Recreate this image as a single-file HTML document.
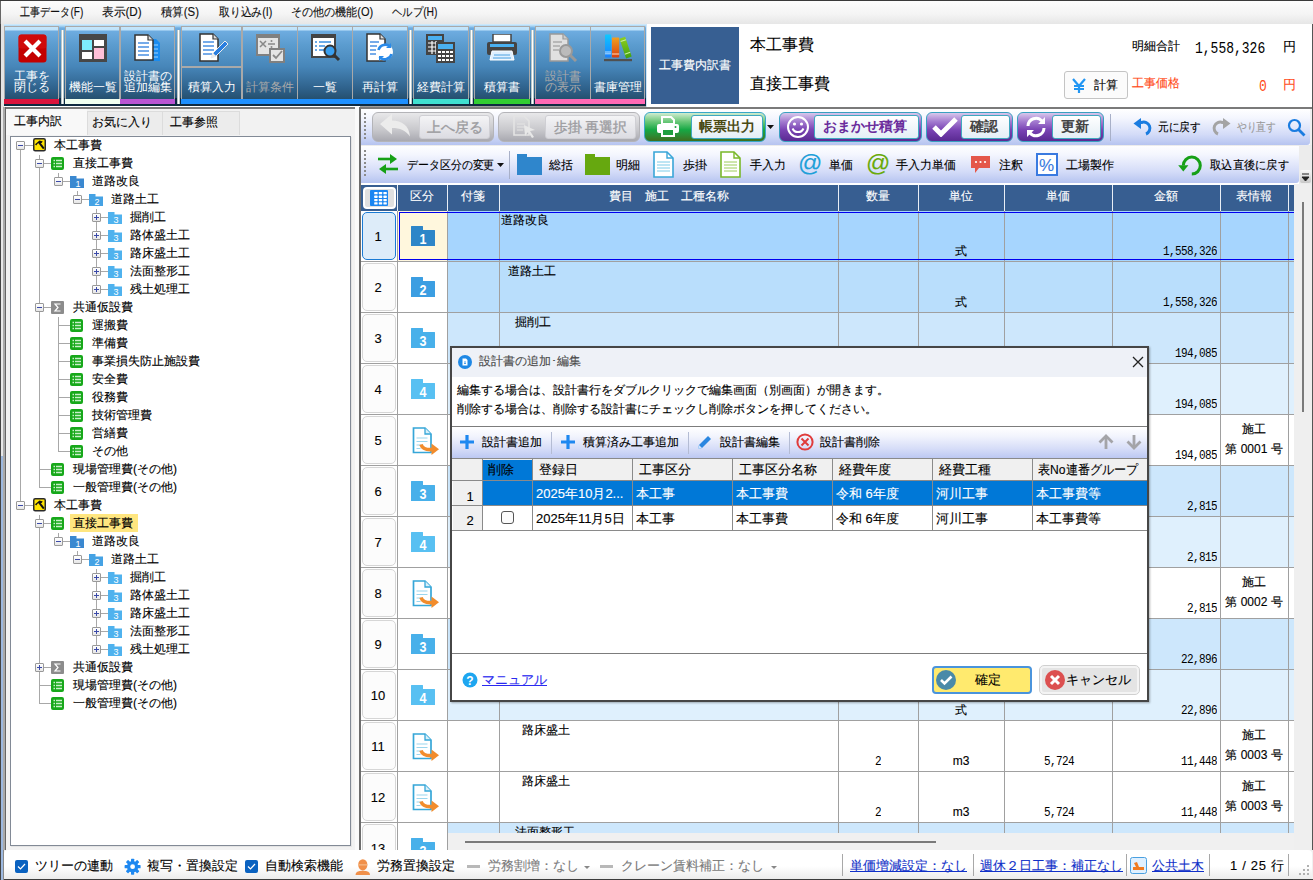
<!DOCTYPE html>
<html><head><meta charset="utf-8">
<style>
*{box-sizing:border-box}
html,body{margin:0;padding:0}
body{width:1313px;height:880px;position:relative;overflow:hidden;background:#f0f0f0;font-family:"Liberation Sans",sans-serif;font-size:12px;color:#000}
.a{position:absolute}
.t{position:absolute;white-space:nowrap;line-height:1;-webkit-text-stroke:0.12px currentColor}
/* menu */
#menu{left:0;top:0;width:1313px;height:24px;background:linear-gradient(#fdfdfd,#f4f4f4 60%,#e6e6e6)}
#menu .t{top:6px;font-size:12px;color:#111}
/* ribbon */
#ribbon{left:0;top:24px;width:650px;height:84px;background:#9fd0f2}
.rb{position:absolute;top:2px;height:73px;border:1px solid #a9a9a9;border-bottom:none;background:linear-gradient(#c3e6fc 0,#bfe2fa 3px,#6eace0 4px,#5b9ccf 25%,#4786b9 55%,#2f628c 85%,#25506f 100%)}
.rb .lb{position:absolute;left:0;right:0;text-align:center;color:#fff;font-size:12px;line-height:12px;white-space:nowrap}
.rb.dis .lb{color:#a9a9a9}
.bar{position:absolute;top:74px;height:6px}
.sep{position:absolute;top:6px;width:3px;height:74px;background:linear-gradient(90deg,#9aa,#fff 50%,#9aa)}
</style></head>
<body>
<div id="menu" class="a">
  <div class="t" style="left:20px;transform:scaleX(0.84);transform-origin:0 0">工事データ(F)</div>
  <div class="t" style="left:102px;transform:scaleX(0.975);transform-origin:0 0">表示(D)</div>
  <div class="t" style="left:161px;transform:scaleX(0.95);transform-origin:0 0">積算(S)</div>
  <div class="t" style="left:219px;transform:scaleX(0.9);transform-origin:0 0">取り込み(I)</div>
  <div class="t" style="left:291px;transform:scaleX(0.92);transform-origin:0 0">その他の機能(O)</div>
  <div class="t" style="left:392px;transform:scaleX(0.865);transform-origin:0 0">ヘルプ(H)</div>
</div>
<div class="a" style="left:0;top:0;width:1px;height:880px;background:#666"></div>

<div class="a" style="left:0;top:0;width:1313px;height:1px;background:#3a3a3a"></div>
<div id="ribbon" class="a" style="background:linear-gradient(#d8eefc 0,#a9d6f5 2px,#6eace0 4px,#5b9ccf 20%,#4786b9 50%,#2f628c 80%,#25506f 88%,#0c2a44 88%)">
  <div class="a" style="left:0;top:80px;width:650px;height:2px;background:#0f2a40"></div>
  <div class="a" style="left:0;top:82px;width:650px;height:2px;background:linear-gradient(#8a8a8a,#d8d8d8)"></div>
  <!-- bars -->
  <div class="bar" style="left:4px;width:55px;background:#dc143c"></div>
  <div class="bar" style="left:65px;width:55px;background:#f0fff0"></div>
  <div class="bar" style="left:120px;width:55px;background:#ba55d3"></div>
  <div class="bar" style="left:181px;width:227px;background:#1e90ff"></div>
  <div class="bar" style="left:413px;width:56px;background:#40e0d0"></div>
  <div class="bar" style="left:474px;width:56px;background:#32cd32"></div>
  <div class="bar" style="left:535px;width:110px;background:#ff69b4"></div>
  <!-- separators -->
  <div class="sep" style="left:61px"></div>
  <div class="sep" style="left:177px"></div>
  <div class="sep" style="left:409px"></div>
  <div class="sep" style="left:470px"></div>
  <div class="sep" style="left:531px"></div>

  <div class="rb" style="left:4px;width:55px">
    <svg class="a" style="left:13px;top:7px" width="29" height="29"><rect x="0.5" y="0.5" width="28" height="28" rx="3" fill="#c40000"/><rect x="0.5" y="0.5" width="28" height="14" rx="3" fill="#d81010" opacity=".6"/><path d="M8.5 8.5L20.5 20.5M20.5 8.5L8.5 20.5" stroke="#fff" stroke-width="4.2" stroke-linecap="square"/></svg>
    <div class="lb" style="top:43px">工事を</div>
    <div class="lb" style="top:54px">閉じる</div>
  </div>
  <div class="rb" style="left:65px;width:55px">
    <svg class="a" style="left:13px;top:7px" width="28" height="28"><rect width="28" height="28" fill="#474747"/><rect x="3" y="6" width="10" height="10" fill="#7eeefc"/><rect x="15" y="6" width="10" height="6" fill="#fff"/><rect x="3" y="18" width="10" height="7" fill="#fff"/><rect x="15" y="14" width="10" height="11" fill="#ffc0d8"/></svg>
    <div class="lb" style="top:54px">機能一覧</div>
  </div>
  <div class="rb" style="left:120px;width:55px">
    <svg class="a" style="left:13px;top:7px" width="30" height="30"><path d="M13 5h9l4 4v18H13z" fill="#1a8cf0"/><path d="M14 11h10M14 15h10M14 19h10M14 23h10" stroke="#9fd4ff" stroke-width="1"/><path d="M1 1h13l5 5v20H1z" fill="#fff" stroke="#333" stroke-width="1.5"/><path d="M14 1v5h5" fill="#ddd" stroke="#333" stroke-width="1.2"/><path d="M4 9h11M4 13h11M4 17h11M4 21h11" stroke="#4a90e2" stroke-width="1.3"/></svg>
    <div class="lb" style="top:43px">設計書の</div>
    <div class="lb" style="top:54px">追加編集</div>
  </div>
  <div class="rb" style="left:181px;width:61px">
    <div class="a" style="left:-1px;top:39px;width:61px;height:2px;background:#a9a9a9"></div>
    <svg class="a" style="left:17px;top:6px" width="30" height="30"><path d="M1 1h13l5 5v22H1z" fill="#fff" stroke="#333" stroke-width="1.5"/><path d="M14 1v5h5" fill="#ddd" stroke="#333" stroke-width="1.2"/><path d="M4 9h11M4 13h11M4 17h11M4 21h9" stroke="#4a90e2" stroke-width="1.3"/><path d="M12 25l2-5 12-12 3 3-12 12z" fill="#2a7fe0" stroke="#eee" stroke-width="1"/><path d="M12 25l2-5 3 3z" fill="#eee"/></svg>
    <div class="lb" style="top:54px">積算入力</div>
  </div>
  <div class="rb dis" style="left:242px;width:56px">
    <svg class="a" style="left:13px;top:7px" width="30" height="30"><rect x="0" y="0" width="24" height="22" fill="#808080"/><rect x="2" y="4" width="20" height="16" fill="#e4e4e4"/><path d="M4 7l6 6M10 7l-6 6" stroke="#888" stroke-width="1.5"/><path d="M12 10h7" stroke="#888" stroke-width="1.5"/><circle cx="15.5" cy="7" r="1" fill="#888"/><circle cx="15.5" cy="13" r="1" fill="#888"/><rect x="14" y="15" width="14" height="13" fill="#e4e4e4" stroke="#808080" stroke-width="2"/><path d="M17 21l3 3 6-7" stroke="#888" stroke-width="1.8" fill="none"/></svg>
    <div class="lb" style="top:54px">計算条件</div>
  </div>
  <div class="rb" style="left:297px;width:56px">
    <svg class="a" style="left:13px;top:7px" width="30" height="30"><rect x="0" y="0" width="25" height="24" fill="#444"/><rect x="2" y="4" width="21" height="18" fill="#fff"/><path d="M4 8h2M8 8h12M4 12h2M8 12h6M4 16h2M8 16h5" stroke="#3a8ee0" stroke-width="1.5"/><circle cx="19" cy="17" r="5.5" fill="#3aa0f0" stroke="#333" stroke-width="2"/><path d="M23 21l5 5" stroke="#333" stroke-width="3"/></svg>
    <div class="lb" style="top:54px">一覧</div>
  </div>
  <div class="rb" style="left:352px;width:56px">
    <svg class="a" style="left:13px;top:6px" width="30" height="30"><path d="M1 1h13l5 5v22H1z" fill="#fff" stroke="#333" stroke-width="1.5"/><path d="M14 1v5h5" fill="#ddd" stroke="#333" stroke-width="1.2"/><path d="M4 9h9M4 13h7M4 17h6M4 21h6" stroke="#4a90e2" stroke-width="1.3"/><circle cx="19" cy="19" r="8" fill="#fff"/><path d="M12.5 17a7 7 0 0 1 12-3M25.5 21a7 7 0 0 1-12 3" stroke="#2a8ae8" stroke-width="2.6" fill="none"/><path d="M25 10v5h-5z M13 28v-5h5z" fill="#2a8ae8"/></svg>
    <div class="lb" style="top:54px">再計算</div>
  </div>
  <div class="rb" style="left:413px;width:56px">
    <svg class="a" style="left:12px;top:7px" width="30" height="30"><rect x="0" y="0" width="18" height="21" fill="#444"/><rect x="2" y="2" width="14" height="4" fill="#4ab0f0"/><path d="M2 9h14M2 13h14M2 17h14M6 7v13M10 7v13" stroke="#fff" stroke-width="1.2"/><rect x="10" y="8" width="19" height="21" fill="#444"/><rect x="12" y="10" width="15" height="5" fill="#4ab0f0"/><g fill="#fff"><rect x="12" y="17" width="3" height="2"/><rect x="16" y="17" width="3" height="2"/><rect x="20" y="17" width="3" height="2"/><rect x="24" y="17" width="3" height="2"/><rect x="12" y="21" width="3" height="2"/><rect x="16" y="21" width="3" height="2"/><rect x="20" y="21" width="3" height="2"/><rect x="24" y="21" width="3" height="2"/><rect x="12" y="25" width="3" height="2"/><rect x="16" y="25" width="3" height="2"/><rect x="20" y="25" width="3" height="2"/><rect x="24" y="25" width="3" height="2"/></g></svg>
    <div class="lb" style="top:54px">経費計算</div>
  </div>
  <div class="rb" style="left:474px;width:56px">
    <svg class="a" style="left:12px;top:7px" width="30" height="30"><rect x="6" y="0" width="18" height="8" fill="#fff" stroke="#444" stroke-width="1.5"/><rect x="0" y="8" width="30" height="13" rx="2" fill="#444"/><rect x="3" y="10" width="24" height="3" fill="#4ab0f0"/><path d="M5 17h20l2 9H3z" fill="#dff0ff" stroke="#fff" stroke-width="1"/><path d="M7 21h16M6 24h18" stroke="#4aa0e0" stroke-width="1"/></svg>
    <div class="lb" style="top:54px">積算書</div>
  </div>
  <div class="rb dis" style="left:535px;width:56px">
    <svg class="a" style="left:13px;top:6px" width="30" height="30"><path d="M1 1h13l5 5v22H1z" fill="#e0e0e0" stroke="#999" stroke-width="1.5"/><path d="M14 1v5h5" fill="#ccc" stroke="#999" stroke-width="1.2"/><path d="M4 9h9M4 13h7M4 17h6" stroke="#aaa" stroke-width="1.3"/><circle cx="17" cy="18" r="6" fill="#bbb" stroke="#999" stroke-width="2"/><path d="M21 22l6 6" stroke="#999" stroke-width="3"/></svg>
    <div class="lb" style="top:43px">設計書</div>
    <div class="lb" style="top:54px">の表示</div>
  </div>
  <div class="rb" style="left:590px;width:55px">
    <svg class="a" style="left:12px;top:6px" width="30" height="30"><defs><linearGradient id="gb" x1="0" x2="0" y1="0" y2="1"><stop offset="0" stop-color="#10c8ff"/><stop offset="1" stop-color="#1a80ff"/></linearGradient><linearGradient id="go" x1="0" x2="0" y1="0" y2="1"><stop offset="0" stop-color="#f0a020"/><stop offset="1" stop-color="#d84010"/></linearGradient><linearGradient id="gg" x1="0" x2="0" y1="0" y2="1"><stop offset="0" stop-color="#90d020"/><stop offset="1" stop-color="#40a010"/></linearGradient></defs><rect x="2" y="1.5" width="6.2" height="23" rx=".8" fill="url(#gb)"/><path d="M2 19h6.2M2 20.8h6.2" stroke="#c8e8ff" stroke-width=".9"/><rect x="9" y="4.5" width="7.2" height="20" rx=".8" fill="url(#go)"/><path d="M9 21h7.2" stroke="#ffc8a0" stroke-width="1.2"/><path d="M16.5 5.8l5.6-2 6.6 19.6-5.6 2z" fill="url(#gg)"/><path d="M17.6 8.6l5.4-1.9M21.8 21.2l5.4-1.9" stroke="#c8f0a0" stroke-width="1.1"/><rect x="1" y="26" width="28" height="2.2" fill="#505050"/></svg>
    <div class="lb" style="top:54px">書庫管理</div>
  </div>
</div>
<div class="a" style="left:646px;top:24px;width:667px;height:84px;background:#fff;border-bottom:1px solid #6c6c6c;border-left:1px solid #cfe6f8"></div>
<div class="a" style="left:651px;top:27px;width:88px;height:77px;background:#375f92"></div>
<div class="t" style="left:651px;top:59px;width:88px;text-align:center;color:#fff;font-size:12px">工事費内訳書</div>
<div class="t" style="left:750px;top:37px;font-size:16px">本工事費</div>
<div class="t" style="left:750px;top:76px;font-size:16px">直接工事費</div>
<div class="t" style="left:1132px;top:40px;font-size:12px">明細合計</div>
<div class="t" style="left:1195px;top:40px;font-size:13px;font-family:'Liberation Mono',monospace;letter-spacing:0px;-webkit-text-stroke:0;transform:scaleY(1.25);transform-origin:0 0">1,558,326</div>
<div class="t" style="left:1283px;top:40px;font-size:13px">円</div>
<div class="a" style="left:1064px;top:71px;width:64px;height:28px;background:#fbfbfb;border:1px solid #c4c4c4;border-radius:3px"></div>
<svg class="a" style="left:1072px;top:78px" width="14" height="15"><path d="M1 1l6 7 6-7M2 8h10M2 11h10M7 8v7" stroke="#2196f3" stroke-width="2.2" fill="none"/></svg>
<div class="t" style="left:1094px;top:79px;font-size:12px">計算</div>
<div class="t" style="left:1132px;top:77px;font-size:12px;color:#ff4c1a">工事価格</div>
<div class="t" style="left:1259px;top:78px;font-size:13px;color:#ff4c1a;font-family:'Liberation Mono',monospace;-webkit-text-stroke:0;transform:scaleY(1.25);transform-origin:0 0">0</div>
<div class="t" style="left:1283px;top:78px;font-size:13px;color:#ff4c1a">円</div>
<div class="a" style="left:0;top:24px;width:4px;height:84px;background:linear-gradient(90deg,#444 0,#444 1px,#e4e4e4 1px)"></div>
<div class="a" style="left:0;top:107px;width:6px;height:773px;background:linear-gradient(90deg,#444 0,#444 1px,#e8e8e8 1px,#e8e8e8 3px,#aaa 3px,#aaa 5px,#666 5px)"></div>
<div class="a" style="left:1px;top:456px;width:2px;height:424px;background:#9db9e0"></div>
<div class="a" style="left:4px;top:106px;width:356px;height:1px;background:#fff"></div>
<div class="a" style="left:6px;top:107px;width:349px;height:743px;background:#f2f2f2;border-top:2px solid #7a7a7a"></div>
<div class="a" style="left:355px;top:107px;width:4px;height:743px;background:#fafafa"></div>
<div class="a" style="left:6px;top:109px;width:81px;height:26px;background:#f8f8f8"></div>
<div class="a" style="left:87px;top:111px;width:76px;height:24px;background:#ececec;border:1px solid #dcdcdc;border-bottom:none"></div>
<div class="a" style="left:163px;top:111px;width:77px;height:24px;background:#ececec;border:1px solid #dcdcdc;border-bottom:none;border-left:none"></div>
<div class="t" style="left:14px;top:115px;font-size:12px">工事内訳</div>
<div class="t" style="left:92px;top:116px;font-size:12px">お気に入り</div>
<div class="t" style="left:170px;top:116px;font-size:12px">工事参照</div>
<div class="a" style="left:10px;top:136px;width:341px;height:710px;background:#fff;border:1px solid #828a96;box-shadow:1px 1px 0 #e4e4e4"></div>
<div class="a" style="left:20px;top:145px;width:1px;height:9px;background:#a8a8a8"></div>
<div class="a" style="left:20px;top:145px;width:13px;height:1px;background:#a8a8a8"></div>
<div class="a" style="left:16px;top:141px;width:9px;height:9px;border:1px solid #999;border-radius:1px;background:linear-gradient(#fff,#e6e6e6)"></div>
<div class="a" style="left:18px;top:145px;width:5px;height:1px;background:#3b4aa8"></div>
<svg class="a" style="left:33px;top:138px" width="13" height="14"><rect x="0.75" y="0.75" width="11.5" height="12" rx="1.5" fill="#ffe400" stroke="#2a2a2a" stroke-width="1.5"/><path d="M2 6.2L6.5 2.6 9.8 3.4 8.6 5 5 5.2 3.2 7.4z" fill="#111"/><path d="M6.2 4.6L10.8 10.6" stroke="#111" stroke-width="2"/></svg>
<div class="t" style="left:54px;top:139px;font-size:12px">本工事費</div>
<div class="a" style="left:39px;top:155px;width:1px;height:8px;background:#a8a8a8"></div>
<div class="a" style="left:39px;top:163px;width:1px;height:9px;background:#a8a8a8"></div>
<div class="a" style="left:20px;top:154px;width:1px;height:18px;background:#a8a8a8"></div>
<div class="a" style="left:39px;top:163px;width:13px;height:1px;background:#a8a8a8"></div>
<div class="a" style="left:35px;top:159px;width:9px;height:9px;border:1px solid #999;border-radius:1px;background:linear-gradient(#fff,#e6e6e6)"></div>
<div class="a" style="left:37px;top:163px;width:5px;height:1px;background:#3b4aa8"></div>
<svg class="a" style="left:51px;top:157px" width="14" height="13"><rect x="0" y="0" width="13" height="13" rx="2" fill="#17a81a"/><path d="M2.5 3.5h1.5M5 3.5h6M2.5 6.5h1.5M5 6.5h6M2.5 9.5h1.5M5 9.5h6" stroke="#c8f0c8" stroke-width="1.5"/></svg>
<div class="t" style="left:73px;top:157px;font-size:12px">直接工事費</div>
<div class="a" style="left:58px;top:173px;width:1px;height:8px;background:#a8a8a8"></div>
<div class="a" style="left:20px;top:172px;width:1px;height:18px;background:#a8a8a8"></div>
<div class="a" style="left:39px;top:172px;width:1px;height:18px;background:#a8a8a8"></div>
<div class="a" style="left:58px;top:181px;width:13px;height:1px;background:#a8a8a8"></div>
<div class="a" style="left:54px;top:177px;width:9px;height:9px;border:1px solid #999;border-radius:1px;background:linear-gradient(#fff,#e6e6e6)"></div>
<div class="a" style="left:56px;top:181px;width:5px;height:1px;background:#3b4aa8"></div>
<svg class="a" style="left:70px;top:176px" width="14" height="12"><path d="M0 0h6.5v2.5H14V12H0z" fill="#3a88d0"/><text x="8" y="10.6" font-size="9" fill="#fff" text-anchor="middle" font-family="Liberation Sans">1</text></svg>
<div class="t" style="left:92px;top:175px;font-size:12px">道路改良</div>
<div class="a" style="left:77px;top:191px;width:1px;height:8px;background:#a8a8a8"></div>
<div class="a" style="left:20px;top:190px;width:1px;height:18px;background:#a8a8a8"></div>
<div class="a" style="left:39px;top:190px;width:1px;height:18px;background:#a8a8a8"></div>
<div class="a" style="left:77px;top:199px;width:13px;height:1px;background:#a8a8a8"></div>
<div class="a" style="left:73px;top:195px;width:9px;height:9px;border:1px solid #999;border-radius:1px;background:linear-gradient(#fff,#e6e6e6)"></div>
<div class="a" style="left:75px;top:199px;width:5px;height:1px;background:#3b4aa8"></div>
<svg class="a" style="left:89px;top:194px" width="14" height="12"><path d="M0 0h6.5v2.5H14V12H0z" fill="#45a2e4"/><text x="8" y="10.6" font-size="9" fill="#fff" text-anchor="middle" font-family="Liberation Sans">2</text></svg>
<div class="t" style="left:111px;top:193px;font-size:12px">道路土工</div>
<div class="a" style="left:96px;top:209px;width:1px;height:8px;background:#a8a8a8"></div>
<div class="a" style="left:96px;top:217px;width:1px;height:9px;background:#a8a8a8"></div>
<div class="a" style="left:20px;top:208px;width:1px;height:18px;background:#a8a8a8"></div>
<div class="a" style="left:39px;top:208px;width:1px;height:18px;background:#a8a8a8"></div>
<div class="a" style="left:96px;top:217px;width:13px;height:1px;background:#a8a8a8"></div>
<div class="a" style="left:92px;top:213px;width:9px;height:9px;border:1px solid #999;border-radius:1px;background:linear-gradient(#fff,#e6e6e6)"></div>
<div class="a" style="left:94px;top:217px;width:5px;height:1px;background:#3b4aa8"></div>
<div class="a" style="left:96px;top:215px;width:1px;height:5px;background:#3b4aa8"></div>
<svg class="a" style="left:108px;top:212px" width="14" height="12"><path d="M0 0h6.5v2.5H14V12H0z" fill="#4fb2ee"/><text x="8" y="10.6" font-size="9" fill="#fff" text-anchor="middle" font-family="Liberation Sans">3</text></svg>
<div class="t" style="left:130px;top:211px;font-size:12px">掘削工</div>
<div class="a" style="left:96px;top:226px;width:1px;height:9px;background:#a8a8a8"></div>
<div class="a" style="left:96px;top:235px;width:1px;height:9px;background:#a8a8a8"></div>
<div class="a" style="left:20px;top:226px;width:1px;height:18px;background:#a8a8a8"></div>
<div class="a" style="left:39px;top:226px;width:1px;height:18px;background:#a8a8a8"></div>
<div class="a" style="left:96px;top:235px;width:13px;height:1px;background:#a8a8a8"></div>
<div class="a" style="left:92px;top:231px;width:9px;height:9px;border:1px solid #999;border-radius:1px;background:linear-gradient(#fff,#e6e6e6)"></div>
<div class="a" style="left:94px;top:235px;width:5px;height:1px;background:#3b4aa8"></div>
<div class="a" style="left:96px;top:233px;width:1px;height:5px;background:#3b4aa8"></div>
<svg class="a" style="left:108px;top:230px" width="14" height="12"><path d="M0 0h6.5v2.5H14V12H0z" fill="#4fb2ee"/><text x="8" y="10.6" font-size="9" fill="#fff" text-anchor="middle" font-family="Liberation Sans">3</text></svg>
<div class="t" style="left:130px;top:229px;font-size:12px">路体盛土工</div>
<div class="a" style="left:96px;top:244px;width:1px;height:9px;background:#a8a8a8"></div>
<div class="a" style="left:96px;top:253px;width:1px;height:9px;background:#a8a8a8"></div>
<div class="a" style="left:20px;top:244px;width:1px;height:18px;background:#a8a8a8"></div>
<div class="a" style="left:39px;top:244px;width:1px;height:18px;background:#a8a8a8"></div>
<div class="a" style="left:96px;top:253px;width:13px;height:1px;background:#a8a8a8"></div>
<div class="a" style="left:92px;top:249px;width:9px;height:9px;border:1px solid #999;border-radius:1px;background:linear-gradient(#fff,#e6e6e6)"></div>
<div class="a" style="left:94px;top:253px;width:5px;height:1px;background:#3b4aa8"></div>
<div class="a" style="left:96px;top:251px;width:1px;height:5px;background:#3b4aa8"></div>
<svg class="a" style="left:108px;top:248px" width="14" height="12"><path d="M0 0h6.5v2.5H14V12H0z" fill="#4fb2ee"/><text x="8" y="10.6" font-size="9" fill="#fff" text-anchor="middle" font-family="Liberation Sans">3</text></svg>
<div class="t" style="left:130px;top:247px;font-size:12px">路床盛土工</div>
<div class="a" style="left:96px;top:262px;width:1px;height:9px;background:#a8a8a8"></div>
<div class="a" style="left:96px;top:271px;width:1px;height:9px;background:#a8a8a8"></div>
<div class="a" style="left:20px;top:262px;width:1px;height:18px;background:#a8a8a8"></div>
<div class="a" style="left:39px;top:262px;width:1px;height:18px;background:#a8a8a8"></div>
<div class="a" style="left:96px;top:271px;width:13px;height:1px;background:#a8a8a8"></div>
<div class="a" style="left:92px;top:267px;width:9px;height:9px;border:1px solid #999;border-radius:1px;background:linear-gradient(#fff,#e6e6e6)"></div>
<div class="a" style="left:94px;top:271px;width:5px;height:1px;background:#3b4aa8"></div>
<div class="a" style="left:96px;top:269px;width:1px;height:5px;background:#3b4aa8"></div>
<svg class="a" style="left:108px;top:266px" width="14" height="12"><path d="M0 0h6.5v2.5H14V12H0z" fill="#4fb2ee"/><text x="8" y="10.6" font-size="9" fill="#fff" text-anchor="middle" font-family="Liberation Sans">3</text></svg>
<div class="t" style="left:130px;top:265px;font-size:12px">法面整形工</div>
<div class="a" style="left:96px;top:280px;width:1px;height:9px;background:#a8a8a8"></div>
<div class="a" style="left:20px;top:280px;width:1px;height:18px;background:#a8a8a8"></div>
<div class="a" style="left:39px;top:280px;width:1px;height:18px;background:#a8a8a8"></div>
<div class="a" style="left:96px;top:289px;width:13px;height:1px;background:#a8a8a8"></div>
<div class="a" style="left:92px;top:285px;width:9px;height:9px;border:1px solid #999;border-radius:1px;background:linear-gradient(#fff,#e6e6e6)"></div>
<div class="a" style="left:94px;top:289px;width:5px;height:1px;background:#3b4aa8"></div>
<div class="a" style="left:96px;top:287px;width:1px;height:5px;background:#3b4aa8"></div>
<svg class="a" style="left:108px;top:284px" width="14" height="12"><path d="M0 0h6.5v2.5H14V12H0z" fill="#4fb2ee"/><text x="8" y="10.6" font-size="9" fill="#fff" text-anchor="middle" font-family="Liberation Sans">3</text></svg>
<div class="t" style="left:130px;top:283px;font-size:12px">残土処理工</div>
<div class="a" style="left:39px;top:298px;width:1px;height:9px;background:#a8a8a8"></div>
<div class="a" style="left:39px;top:307px;width:1px;height:9px;background:#a8a8a8"></div>
<div class="a" style="left:20px;top:298px;width:1px;height:18px;background:#a8a8a8"></div>
<div class="a" style="left:39px;top:307px;width:13px;height:1px;background:#a8a8a8"></div>
<div class="a" style="left:35px;top:303px;width:9px;height:9px;border:1px solid #999;border-radius:1px;background:linear-gradient(#fff,#e6e6e6)"></div>
<div class="a" style="left:37px;top:307px;width:5px;height:1px;background:#3b4aa8"></div>
<svg class="a" style="left:51px;top:301px" width="14" height="13"><rect x="0" y="0" width="13" height="13" rx="1" fill="#8c8c8c"/><path d="M9.5 3H4l3 3.5L4 10h5.5" stroke="#fff" stroke-width="1.2" fill="none"/></svg>
<div class="t" style="left:73px;top:301px;font-size:12px">共通仮設費</div>
<div class="a" style="left:58px;top:317px;width:1px;height:8px;background:#a8a8a8"></div>
<div class="a" style="left:58px;top:325px;width:1px;height:9px;background:#a8a8a8"></div>
<div class="a" style="left:20px;top:316px;width:1px;height:18px;background:#a8a8a8"></div>
<div class="a" style="left:39px;top:316px;width:1px;height:18px;background:#a8a8a8"></div>
<div class="a" style="left:58px;top:325px;width:13px;height:1px;background:#a8a8a8"></div>
<svg class="a" style="left:70px;top:319px" width="14" height="13"><rect x="0" y="0" width="13" height="13" rx="2" fill="#17a81a"/><path d="M2.5 3.5h1.5M5 3.5h6M2.5 6.5h1.5M5 6.5h6M2.5 9.5h1.5M5 9.5h6" stroke="#c8f0c8" stroke-width="1.5"/></svg>
<div class="t" style="left:92px;top:319px;font-size:12px">運搬費</div>
<div class="a" style="left:58px;top:334px;width:1px;height:9px;background:#a8a8a8"></div>
<div class="a" style="left:58px;top:343px;width:1px;height:9px;background:#a8a8a8"></div>
<div class="a" style="left:20px;top:334px;width:1px;height:18px;background:#a8a8a8"></div>
<div class="a" style="left:39px;top:334px;width:1px;height:18px;background:#a8a8a8"></div>
<div class="a" style="left:58px;top:343px;width:13px;height:1px;background:#a8a8a8"></div>
<svg class="a" style="left:70px;top:337px" width="14" height="13"><rect x="0" y="0" width="13" height="13" rx="2" fill="#17a81a"/><path d="M2.5 3.5h1.5M5 3.5h6M2.5 6.5h1.5M5 6.5h6M2.5 9.5h1.5M5 9.5h6" stroke="#c8f0c8" stroke-width="1.5"/></svg>
<div class="t" style="left:92px;top:337px;font-size:12px">準備費</div>
<div class="a" style="left:58px;top:352px;width:1px;height:9px;background:#a8a8a8"></div>
<div class="a" style="left:58px;top:361px;width:1px;height:9px;background:#a8a8a8"></div>
<div class="a" style="left:20px;top:352px;width:1px;height:18px;background:#a8a8a8"></div>
<div class="a" style="left:39px;top:352px;width:1px;height:18px;background:#a8a8a8"></div>
<div class="a" style="left:58px;top:361px;width:13px;height:1px;background:#a8a8a8"></div>
<svg class="a" style="left:70px;top:355px" width="14" height="13"><rect x="0" y="0" width="13" height="13" rx="2" fill="#17a81a"/><path d="M2.5 3.5h1.5M5 3.5h6M2.5 6.5h1.5M5 6.5h6M2.5 9.5h1.5M5 9.5h6" stroke="#c8f0c8" stroke-width="1.5"/></svg>
<div class="t" style="left:92px;top:355px;font-size:12px">事業損失防止施設費</div>
<div class="a" style="left:58px;top:370px;width:1px;height:9px;background:#a8a8a8"></div>
<div class="a" style="left:58px;top:379px;width:1px;height:9px;background:#a8a8a8"></div>
<div class="a" style="left:20px;top:370px;width:1px;height:18px;background:#a8a8a8"></div>
<div class="a" style="left:39px;top:370px;width:1px;height:18px;background:#a8a8a8"></div>
<div class="a" style="left:58px;top:379px;width:13px;height:1px;background:#a8a8a8"></div>
<svg class="a" style="left:70px;top:373px" width="14" height="13"><rect x="0" y="0" width="13" height="13" rx="2" fill="#17a81a"/><path d="M2.5 3.5h1.5M5 3.5h6M2.5 6.5h1.5M5 6.5h6M2.5 9.5h1.5M5 9.5h6" stroke="#c8f0c8" stroke-width="1.5"/></svg>
<div class="t" style="left:92px;top:373px;font-size:12px">安全費</div>
<div class="a" style="left:58px;top:388px;width:1px;height:9px;background:#a8a8a8"></div>
<div class="a" style="left:58px;top:397px;width:1px;height:9px;background:#a8a8a8"></div>
<div class="a" style="left:20px;top:388px;width:1px;height:18px;background:#a8a8a8"></div>
<div class="a" style="left:39px;top:388px;width:1px;height:18px;background:#a8a8a8"></div>
<div class="a" style="left:58px;top:397px;width:13px;height:1px;background:#a8a8a8"></div>
<svg class="a" style="left:70px;top:391px" width="14" height="13"><rect x="0" y="0" width="13" height="13" rx="2" fill="#17a81a"/><path d="M2.5 3.5h1.5M5 3.5h6M2.5 6.5h1.5M5 6.5h6M2.5 9.5h1.5M5 9.5h6" stroke="#c8f0c8" stroke-width="1.5"/></svg>
<div class="t" style="left:92px;top:391px;font-size:12px">役務費</div>
<div class="a" style="left:58px;top:406px;width:1px;height:9px;background:#a8a8a8"></div>
<div class="a" style="left:58px;top:415px;width:1px;height:9px;background:#a8a8a8"></div>
<div class="a" style="left:20px;top:406px;width:1px;height:18px;background:#a8a8a8"></div>
<div class="a" style="left:39px;top:406px;width:1px;height:18px;background:#a8a8a8"></div>
<div class="a" style="left:58px;top:415px;width:13px;height:1px;background:#a8a8a8"></div>
<svg class="a" style="left:70px;top:409px" width="14" height="13"><rect x="0" y="0" width="13" height="13" rx="2" fill="#17a81a"/><path d="M2.5 3.5h1.5M5 3.5h6M2.5 6.5h1.5M5 6.5h6M2.5 9.5h1.5M5 9.5h6" stroke="#c8f0c8" stroke-width="1.5"/></svg>
<div class="t" style="left:92px;top:409px;font-size:12px">技術管理費</div>
<div class="a" style="left:58px;top:424px;width:1px;height:9px;background:#a8a8a8"></div>
<div class="a" style="left:58px;top:433px;width:1px;height:9px;background:#a8a8a8"></div>
<div class="a" style="left:20px;top:424px;width:1px;height:18px;background:#a8a8a8"></div>
<div class="a" style="left:39px;top:424px;width:1px;height:18px;background:#a8a8a8"></div>
<div class="a" style="left:58px;top:433px;width:13px;height:1px;background:#a8a8a8"></div>
<svg class="a" style="left:70px;top:427px" width="14" height="13"><rect x="0" y="0" width="13" height="13" rx="2" fill="#17a81a"/><path d="M2.5 3.5h1.5M5 3.5h6M2.5 6.5h1.5M5 6.5h6M2.5 9.5h1.5M5 9.5h6" stroke="#c8f0c8" stroke-width="1.5"/></svg>
<div class="t" style="left:92px;top:427px;font-size:12px">営繕費</div>
<div class="a" style="left:58px;top:442px;width:1px;height:9px;background:#a8a8a8"></div>
<div class="a" style="left:20px;top:442px;width:1px;height:18px;background:#a8a8a8"></div>
<div class="a" style="left:39px;top:442px;width:1px;height:18px;background:#a8a8a8"></div>
<div class="a" style="left:58px;top:451px;width:13px;height:1px;background:#a8a8a8"></div>
<svg class="a" style="left:70px;top:445px" width="14" height="13"><rect x="0" y="0" width="13" height="13" rx="2" fill="#17a81a"/><path d="M2.5 3.5h1.5M5 3.5h6M2.5 6.5h1.5M5 6.5h6M2.5 9.5h1.5M5 9.5h6" stroke="#c8f0c8" stroke-width="1.5"/></svg>
<div class="t" style="left:92px;top:445px;font-size:12px">その他</div>
<div class="a" style="left:39px;top:460px;width:1px;height:9px;background:#a8a8a8"></div>
<div class="a" style="left:39px;top:469px;width:1px;height:9px;background:#a8a8a8"></div>
<div class="a" style="left:20px;top:460px;width:1px;height:18px;background:#a8a8a8"></div>
<div class="a" style="left:39px;top:469px;width:13px;height:1px;background:#a8a8a8"></div>
<svg class="a" style="left:51px;top:463px" width="14" height="13"><rect x="0" y="0" width="13" height="13" rx="2" fill="#17a81a"/><path d="M2.5 3.5h1.5M5 3.5h6M2.5 6.5h1.5M5 6.5h6M2.5 9.5h1.5M5 9.5h6" stroke="#c8f0c8" stroke-width="1.5"/></svg>
<div class="t" style="left:73px;top:463px;font-size:12px">現場管理費(その他)</div>
<div class="a" style="left:39px;top:478px;width:1px;height:9px;background:#a8a8a8"></div>
<div class="a" style="left:20px;top:478px;width:1px;height:18px;background:#a8a8a8"></div>
<div class="a" style="left:39px;top:487px;width:13px;height:1px;background:#a8a8a8"></div>
<svg class="a" style="left:51px;top:481px" width="14" height="13"><rect x="0" y="0" width="13" height="13" rx="2" fill="#17a81a"/><path d="M2.5 3.5h1.5M5 3.5h6M2.5 6.5h1.5M5 6.5h6M2.5 9.5h1.5M5 9.5h6" stroke="#c8f0c8" stroke-width="1.5"/></svg>
<div class="t" style="left:73px;top:481px;font-size:12px">一般管理費(その他)</div>
<div class="a" style="left:20px;top:496px;width:1px;height:9px;background:#a8a8a8"></div>
<div class="a" style="left:20px;top:505px;width:13px;height:1px;background:#a8a8a8"></div>
<div class="a" style="left:16px;top:501px;width:9px;height:9px;border:1px solid #999;border-radius:1px;background:linear-gradient(#fff,#e6e6e6)"></div>
<div class="a" style="left:18px;top:505px;width:5px;height:1px;background:#3b4aa8"></div>
<svg class="a" style="left:33px;top:498px" width="13" height="14"><rect x="0.75" y="0.75" width="11.5" height="12" rx="1.5" fill="#ffe400" stroke="#2a2a2a" stroke-width="1.5"/><path d="M2 6.2L6.5 2.6 9.8 3.4 8.6 5 5 5.2 3.2 7.4z" fill="#111"/><path d="M6.2 4.6L10.8 10.6" stroke="#111" stroke-width="2"/></svg>
<div class="t" style="left:54px;top:499px;font-size:12px">本工事費</div>
<div class="a" style="left:39px;top:515px;width:1px;height:8px;background:#a8a8a8"></div>
<div class="a" style="left:39px;top:523px;width:1px;height:9px;background:#a8a8a8"></div>
<div class="a" style="left:39px;top:523px;width:13px;height:1px;background:#a8a8a8"></div>
<div class="a" style="left:35px;top:519px;width:9px;height:9px;border:1px solid #999;border-radius:1px;background:linear-gradient(#fff,#e6e6e6)"></div>
<div class="a" style="left:37px;top:523px;width:5px;height:1px;background:#3b4aa8"></div>
<svg class="a" style="left:51px;top:517px" width="14" height="13"><rect x="0" y="0" width="13" height="13" rx="2" fill="#17a81a"/><path d="M2.5 3.5h1.5M5 3.5h6M2.5 6.5h1.5M5 6.5h6M2.5 9.5h1.5M5 9.5h6" stroke="#c8f0c8" stroke-width="1.5"/></svg>
<div class="a" style="left:70px;top:514px;width:68px;height:18px;background:#ffe680"></div>
<div class="t" style="left:73px;top:517px;font-size:12px">直接工事費</div>
<div class="a" style="left:58px;top:533px;width:1px;height:8px;background:#a8a8a8"></div>
<div class="a" style="left:39px;top:532px;width:1px;height:18px;background:#a8a8a8"></div>
<div class="a" style="left:58px;top:541px;width:13px;height:1px;background:#a8a8a8"></div>
<div class="a" style="left:54px;top:537px;width:9px;height:9px;border:1px solid #999;border-radius:1px;background:linear-gradient(#fff,#e6e6e6)"></div>
<div class="a" style="left:56px;top:541px;width:5px;height:1px;background:#3b4aa8"></div>
<svg class="a" style="left:70px;top:536px" width="14" height="12"><path d="M0 0h6.5v2.5H14V12H0z" fill="#3a88d0"/><text x="8" y="10.6" font-size="9" fill="#fff" text-anchor="middle" font-family="Liberation Sans">1</text></svg>
<div class="t" style="left:92px;top:535px;font-size:12px">道路改良</div>
<div class="a" style="left:77px;top:551px;width:1px;height:8px;background:#a8a8a8"></div>
<div class="a" style="left:39px;top:550px;width:1px;height:18px;background:#a8a8a8"></div>
<div class="a" style="left:77px;top:559px;width:13px;height:1px;background:#a8a8a8"></div>
<div class="a" style="left:73px;top:555px;width:9px;height:9px;border:1px solid #999;border-radius:1px;background:linear-gradient(#fff,#e6e6e6)"></div>
<div class="a" style="left:75px;top:559px;width:5px;height:1px;background:#3b4aa8"></div>
<svg class="a" style="left:89px;top:554px" width="14" height="12"><path d="M0 0h6.5v2.5H14V12H0z" fill="#45a2e4"/><text x="8" y="10.6" font-size="9" fill="#fff" text-anchor="middle" font-family="Liberation Sans">2</text></svg>
<div class="t" style="left:111px;top:553px;font-size:12px">道路土工</div>
<div class="a" style="left:96px;top:569px;width:1px;height:8px;background:#a8a8a8"></div>
<div class="a" style="left:96px;top:577px;width:1px;height:9px;background:#a8a8a8"></div>
<div class="a" style="left:39px;top:568px;width:1px;height:18px;background:#a8a8a8"></div>
<div class="a" style="left:96px;top:577px;width:13px;height:1px;background:#a8a8a8"></div>
<div class="a" style="left:92px;top:573px;width:9px;height:9px;border:1px solid #999;border-radius:1px;background:linear-gradient(#fff,#e6e6e6)"></div>
<div class="a" style="left:94px;top:577px;width:5px;height:1px;background:#3b4aa8"></div>
<div class="a" style="left:96px;top:575px;width:1px;height:5px;background:#3b4aa8"></div>
<svg class="a" style="left:108px;top:572px" width="14" height="12"><path d="M0 0h6.5v2.5H14V12H0z" fill="#4fb2ee"/><text x="8" y="10.6" font-size="9" fill="#fff" text-anchor="middle" font-family="Liberation Sans">3</text></svg>
<div class="t" style="left:130px;top:571px;font-size:12px">掘削工</div>
<div class="a" style="left:96px;top:586px;width:1px;height:9px;background:#a8a8a8"></div>
<div class="a" style="left:96px;top:595px;width:1px;height:9px;background:#a8a8a8"></div>
<div class="a" style="left:39px;top:586px;width:1px;height:18px;background:#a8a8a8"></div>
<div class="a" style="left:96px;top:595px;width:13px;height:1px;background:#a8a8a8"></div>
<div class="a" style="left:92px;top:591px;width:9px;height:9px;border:1px solid #999;border-radius:1px;background:linear-gradient(#fff,#e6e6e6)"></div>
<div class="a" style="left:94px;top:595px;width:5px;height:1px;background:#3b4aa8"></div>
<div class="a" style="left:96px;top:593px;width:1px;height:5px;background:#3b4aa8"></div>
<svg class="a" style="left:108px;top:590px" width="14" height="12"><path d="M0 0h6.5v2.5H14V12H0z" fill="#4fb2ee"/><text x="8" y="10.6" font-size="9" fill="#fff" text-anchor="middle" font-family="Liberation Sans">3</text></svg>
<div class="t" style="left:130px;top:589px;font-size:12px">路体盛土工</div>
<div class="a" style="left:96px;top:604px;width:1px;height:9px;background:#a8a8a8"></div>
<div class="a" style="left:96px;top:613px;width:1px;height:9px;background:#a8a8a8"></div>
<div class="a" style="left:39px;top:604px;width:1px;height:18px;background:#a8a8a8"></div>
<div class="a" style="left:96px;top:613px;width:13px;height:1px;background:#a8a8a8"></div>
<div class="a" style="left:92px;top:609px;width:9px;height:9px;border:1px solid #999;border-radius:1px;background:linear-gradient(#fff,#e6e6e6)"></div>
<div class="a" style="left:94px;top:613px;width:5px;height:1px;background:#3b4aa8"></div>
<div class="a" style="left:96px;top:611px;width:1px;height:5px;background:#3b4aa8"></div>
<svg class="a" style="left:108px;top:608px" width="14" height="12"><path d="M0 0h6.5v2.5H14V12H0z" fill="#4fb2ee"/><text x="8" y="10.6" font-size="9" fill="#fff" text-anchor="middle" font-family="Liberation Sans">3</text></svg>
<div class="t" style="left:130px;top:607px;font-size:12px">路床盛土工</div>
<div class="a" style="left:96px;top:622px;width:1px;height:9px;background:#a8a8a8"></div>
<div class="a" style="left:96px;top:631px;width:1px;height:9px;background:#a8a8a8"></div>
<div class="a" style="left:39px;top:622px;width:1px;height:18px;background:#a8a8a8"></div>
<div class="a" style="left:96px;top:631px;width:13px;height:1px;background:#a8a8a8"></div>
<div class="a" style="left:92px;top:627px;width:9px;height:9px;border:1px solid #999;border-radius:1px;background:linear-gradient(#fff,#e6e6e6)"></div>
<div class="a" style="left:94px;top:631px;width:5px;height:1px;background:#3b4aa8"></div>
<div class="a" style="left:96px;top:629px;width:1px;height:5px;background:#3b4aa8"></div>
<svg class="a" style="left:108px;top:626px" width="14" height="12"><path d="M0 0h6.5v2.5H14V12H0z" fill="#4fb2ee"/><text x="8" y="10.6" font-size="9" fill="#fff" text-anchor="middle" font-family="Liberation Sans">3</text></svg>
<div class="t" style="left:130px;top:625px;font-size:12px">法面整形工</div>
<div class="a" style="left:96px;top:640px;width:1px;height:9px;background:#a8a8a8"></div>
<div class="a" style="left:39px;top:640px;width:1px;height:18px;background:#a8a8a8"></div>
<div class="a" style="left:96px;top:649px;width:13px;height:1px;background:#a8a8a8"></div>
<div class="a" style="left:92px;top:645px;width:9px;height:9px;border:1px solid #999;border-radius:1px;background:linear-gradient(#fff,#e6e6e6)"></div>
<div class="a" style="left:94px;top:649px;width:5px;height:1px;background:#3b4aa8"></div>
<div class="a" style="left:96px;top:647px;width:1px;height:5px;background:#3b4aa8"></div>
<svg class="a" style="left:108px;top:644px" width="14" height="12"><path d="M0 0h6.5v2.5H14V12H0z" fill="#4fb2ee"/><text x="8" y="10.6" font-size="9" fill="#fff" text-anchor="middle" font-family="Liberation Sans">3</text></svg>
<div class="t" style="left:130px;top:643px;font-size:12px">残土処理工</div>
<div class="a" style="left:39px;top:658px;width:1px;height:9px;background:#a8a8a8"></div>
<div class="a" style="left:39px;top:667px;width:1px;height:9px;background:#a8a8a8"></div>
<div class="a" style="left:39px;top:667px;width:13px;height:1px;background:#a8a8a8"></div>
<div class="a" style="left:35px;top:663px;width:9px;height:9px;border:1px solid #999;border-radius:1px;background:linear-gradient(#fff,#e6e6e6)"></div>
<div class="a" style="left:37px;top:667px;width:5px;height:1px;background:#3b4aa8"></div>
<div class="a" style="left:39px;top:665px;width:1px;height:5px;background:#3b4aa8"></div>
<svg class="a" style="left:51px;top:661px" width="14" height="13"><rect x="0" y="0" width="13" height="13" rx="1" fill="#8c8c8c"/><path d="M9.5 3H4l3 3.5L4 10h5.5" stroke="#fff" stroke-width="1.2" fill="none"/></svg>
<div class="t" style="left:73px;top:661px;font-size:12px">共通仮設費</div>
<div class="a" style="left:39px;top:676px;width:1px;height:9px;background:#a8a8a8"></div>
<div class="a" style="left:39px;top:685px;width:1px;height:9px;background:#a8a8a8"></div>
<div class="a" style="left:39px;top:685px;width:13px;height:1px;background:#a8a8a8"></div>
<svg class="a" style="left:51px;top:679px" width="14" height="13"><rect x="0" y="0" width="13" height="13" rx="2" fill="#17a81a"/><path d="M2.5 3.5h1.5M5 3.5h6M2.5 6.5h1.5M5 6.5h6M2.5 9.5h1.5M5 9.5h6" stroke="#c8f0c8" stroke-width="1.5"/></svg>
<div class="t" style="left:73px;top:679px;font-size:12px">現場管理費(その他)</div>
<div class="a" style="left:39px;top:694px;width:1px;height:9px;background:#a8a8a8"></div>
<div class="a" style="left:39px;top:703px;width:13px;height:1px;background:#a8a8a8"></div>
<svg class="a" style="left:51px;top:697px" width="14" height="13"><rect x="0" y="0" width="13" height="13" rx="2" fill="#17a81a"/><path d="M2.5 3.5h1.5M5 3.5h6M2.5 6.5h1.5M5 6.5h6M2.5 9.5h1.5M5 9.5h6" stroke="#c8f0c8" stroke-width="1.5"/></svg>
<div class="t" style="left:73px;top:697px;font-size:12px">一般管理費(その他)</div>
<!-- right panel frame -->
<div class="a" style="left:359px;top:107px;width:954px;height:743px;background:#fff;border-left:2px solid #6d6d6d;border-top:2px solid #7a7a7a"></div>
<!-- toolbar 1 -->
<div class="a" style="left:1310px;top:109px;width:3px;height:36px;background:#f0f0f0"></div>
<div class="a" style="left:361px;top:109px;width:949px;height:36px;background:linear-gradient(#fff 0,#f4f6fe 25%,#d4dcf8 70%,#b6c4f0 100%);border-radius:0 0 3px 0"></div>
<div class="a" style="left:364px;top:113px;width:2px;height:28px;background:repeating-linear-gradient(#8a8a8a 0,#8a8a8a 2px,transparent 2px,transparent 4px)"></div>
<!-- toolbar 2 -->
<div class="a" style="left:361px;top:145px;width:938px;height:38px;background:linear-gradient(#fff 0,#f4f6fe 25%,#d4dcf8 70%,#b6c4f0 100%);border-radius:0 0 3px 0"></div>
<div class="a" style="left:1299px;top:145px;width:14px;height:39px;background:#ececec"></div>
<div class="a" style="left:361px;top:145px;width:938px;height:1px;background:#ececec"></div>
<div class="a" style="left:1300px;top:170px;width:11px;height:13px;background:linear-gradient(#f8f8f8,#c8c8c8);border-radius:2px"></div>
<svg class="a" style="left:1301px;top:173px" width="9" height="9"><path d="M1 1h7M1 4h7l-3.5 4z" stroke="#222" fill="#222" stroke-width="1"/></svg>
<div class="a" style="left:364px;top:150px;width:2px;height:28px;background:repeating-linear-gradient(#8a8a8a 0,#8a8a8a 2px,transparent 2px,transparent 4px)"></div>

<!-- 上へ戻る -->
<div class="a" style="left:372px;top:112px;width:122px;height:30px;border-radius:6px;border:1px solid #b4b4b8;background:linear-gradient(#e8e8ea,#c8c8cc 60%,#a9a9b0)"></div>
<svg class="a" style="left:379px;top:113px" width="32" height="25"><path d="M1 11L13 1v6.5c10 0 17 5 18 16-4-6-10-8.5-18-8.5v6.5z" fill="#ececec"/></svg>
<div class="a" style="left:419px;top:115px;width:71px;height:24px;border-radius:3px;border:1px solid #cfcfd4;background:linear-gradient(#f4f4f6,#dcdce2)"></div>
<div class="t" style="left:427px;top:120px;font-size:14px;color:#9c9ca0;-webkit-text-stroke:0.35px #9c9ca0">上へ戻る</div>
<!-- 歩掛 再選択 -->
<div class="a" style="left:498px;top:112px;width:142px;height:30px;border-radius:6px;border:1px solid #b4b4b8;background:linear-gradient(#e8e8ea,#c8c8cc 60%,#a9a9b0)"></div>
<svg class="a" style="left:512px;top:115px" width="28" height="26"><path d="M2 1h10l5 5v14H2z" fill="none" stroke="#e4e4e4" stroke-width="1.6"/><path d="M5 9h8M5 12h8M5 15h6" stroke="#e4e4e4" stroke-width="1.2"/><path d="M12 10l11 5-5 1 4 6-2 1-4-6-3 4z" fill="#e8e8e8"/></svg>
<div class="a" style="left:545px;top:115px;width:91px;height:24px;border-radius:3px;border:1px solid #cfcfd4;background:linear-gradient(#f4f4f6,#dcdce2)"></div>
<div class="t" style="left:554px;top:120px;font-size:14px;color:#9c9ca0;-webkit-text-stroke:0.35px #9c9ca0;transform:scaleX(.985);transform-origin:0 0">歩掛 再選択</div>
<!-- 帳票出力 -->
<div class="a" style="left:644px;top:112px;width:122px;height:30px;border-radius:6px;border:1px solid #3aa8c8;background:linear-gradient(#d0ecd0 0,#6cc87a 30%,#16a844 60%,#2c8c34 80%,#3e6e1e 100%)"></div>
<svg class="a" style="left:656px;top:116px" width="24" height="21"><path d="M6 1h9l3 3v4H6z" fill="none" stroke="#fff" stroke-width="2"/><rect x="1" y="8" width="22" height="9" rx="2" fill="#fff"/><rect x="6" y="13" width="12" height="7" fill="#20a040" stroke="#fff" stroke-width="2"/><circle cx="19.5" cy="11" r="1" fill="#20a040"/></svg>
<div class="a" style="left:691px;top:115px;width:72px;height:24px;border-radius:3px;border:1px solid #40a8c0;background:linear-gradient(#fff,#e4eef6)"></div>
<div class="t" style="left:699px;top:119px;font-size:14px;font-weight:bold;-webkit-text-stroke:0;color:#4a4a14">帳票出力</div>
<svg class="a" style="left:767px;top:125px" width="7" height="5"><path d="M0 0h7L3.5 4z" fill="#111"/></svg>
<!-- おまかせ積算 -->
<div class="a" style="left:779px;top:112px;width:143px;height:30px;border-radius:6px;border:1px solid #3aa0c0;background:linear-gradient(#d8c8ec 0,#a47cd0 30%,#7a44b4 60%,#5a2a92 100%)"></div>
<svg class="a" style="left:786px;top:115px" width="24" height="24"><circle cx="12" cy="12" r="10" fill="none" stroke="#fff" stroke-width="2"/><circle cx="8.5" cy="9" r="1.6" fill="#fff"/><circle cx="15.5" cy="9" r="1.6" fill="#fff"/><path d="M6.5 13.5a6 6 0 0 0 11 0" stroke="#fff" stroke-width="2" fill="none"/></svg>
<div class="a" style="left:814px;top:115px;width:105px;height:24px;border-radius:3px;border:1px solid #40a8c0;background:linear-gradient(#fff,#e4eef6)"></div>
<div class="t" style="left:823px;top:119px;font-size:14px;font-weight:bold;-webkit-text-stroke:0;color:#6a2c9c">おまかせ積算</div>
<!-- 確認 -->
<div class="a" style="left:926px;top:112px;width:87px;height:30px;border-radius:6px;border:1px solid #3aa0c0;background:linear-gradient(#d8c8ec 0,#a47cd0 30%,#7a44b4 60%,#5a2a92 100%)"></div>
<svg class="a" style="left:932px;top:117px" width="26" height="20"><path d="M2 10l7 7L24 2" stroke="#fff" stroke-width="5" fill="none"/></svg>
<div class="a" style="left:961px;top:115px;width:49px;height:24px;border-radius:3px;border:1px solid #40a8c0;background:linear-gradient(#fff,#e4eef6)"></div>
<div class="t" style="left:970px;top:119px;font-size:14px;font-weight:bold;-webkit-text-stroke:0;color:#444">確認</div>
<!-- 更新 -->
<div class="a" style="left:1017px;top:112px;width:87px;height:30px;border-radius:6px;border:1px solid #3aa0c0;background:linear-gradient(#d8c8ec 0,#a47cd0 30%,#7a44b4 60%,#5a2a92 100%)"></div>
<svg class="a" style="left:1024px;top:115px" width="24" height="24"><path d="M4 11a8 8 0 0 1 14-5M20 13a8 8 0 0 1-14 5" stroke="#fff" stroke-width="3" fill="none"/><path d="M21 2v7h-7zM3 22v-7h7z" fill="#fff"/></svg>
<div class="a" style="left:1052px;top:115px;width:49px;height:24px;border-radius:3px;border:1px solid #40a8c0;background:linear-gradient(#fff,#e4eef6)"></div>
<div class="t" style="left:1061px;top:119px;font-size:14px;font-weight:bold;-webkit-text-stroke:0;color:#444">更新</div>
<div class="a" style="left:1110px;top:114px;width:1px;height:27px;background:#a8b0c8"></div>
<svg class="a" style="left:1133px;top:117px" width="20" height="20"><path d="M6.5 5.5h2a6 6 0 0 1 4.5 11.5" stroke="#1a7ce0" stroke-width="3" fill="none"/><path d="M0.5 6.5L8 1v11z" fill="#1a7ce0"/></svg>
<div class="t" style="left:1158px;top:121px;font-size:12px;transform:scaleX(.89);transform-origin:0 0">元に戻す</div>
<svg class="a" style="left:1211px;top:117px" width="20" height="20"><path d="M13.5 5.5h-2a6 6 0 0 0-4.5 11.5" stroke="#a4a4a4" stroke-width="3" fill="none"/><path d="M19.5 6.5L12 1v11z" fill="#a4a4a4"/></svg>
<div class="t" style="left:1237px;top:121px;font-size:12px;color:#9a9a9a;transform:scaleX(.81);transform-origin:0 0">やり直す</div>
<svg class="a" style="left:1287px;top:118px" width="19" height="19"><circle cx="7.5" cy="7.5" r="5.5" stroke="#1a7ce0" stroke-width="2.2" fill="none"/><path d="M11.5 11.5l6 6" stroke="#1a7ce0" stroke-width="2.8"/></svg>

<!-- toolbar 2 items -->
<svg class="a" style="left:377px;top:154px" width="22" height="20"><path d="M1 5h14" stroke="#16a016" stroke-width="2.6"/><path d="M13 0l7 5-7 5z" fill="#16a016"/><path d="M21 15H7" stroke="#16a016" stroke-width="2.6"/><path d="M9 10l-7 5 7 5z" fill="#16a016"/></svg>
<div class="t" style="left:407px;top:159px;font-size:12px;transform:scaleX(.91);transform-origin:0 0">データ区分の変更</div>
<svg class="a" style="left:497px;top:163px" width="7" height="4"><path d="M0 0h7L3.5 4z" fill="#111"/></svg>
<div class="a" style="left:509px;top:151px;width:1px;height:28px;background:#a8b0c8"></div>
<svg class="a" style="left:517px;top:154px" width="25" height="21"><path d="M0 0h10v3h15v18H0z" fill="#2f86cc"/></svg>
<div class="t" style="left:549px;top:159px;font-size:12px">総括</div>
<svg class="a" style="left:585px;top:154px" width="25" height="21"><path d="M0 0h10v3h15v18H0z" fill="#66a80f"/></svg>
<div class="t" style="left:616px;top:159px;font-size:12px">明細</div>
<svg class="a" style="left:653px;top:151px" width="22" height="27"><path d="M1 1h13l6 6v19H1z" fill="#fff" stroke="#3aa6d8" stroke-width="1.6"/><path d="M14 1v6h6" fill="none" stroke="#3aa6d8" stroke-width="1.4"/><path d="M4 11h13M4 14h13M4 17h13M4 20h13" stroke="#7ccbe8" stroke-width="1"/></svg>
<div class="t" style="left:683px;top:159px;font-size:12px">歩掛</div>
<svg class="a" style="left:720px;top:151px" width="22" height="27"><path d="M1 1h13l6 6v19H1z" fill="#fff" stroke="#7ab82a" stroke-width="1.6"/><path d="M14 1v6h6" fill="none" stroke="#7ab82a" stroke-width="1.4"/><path d="M4 11h13M4 14h13M4 17h13M4 20h13" stroke="#9ccc5a" stroke-width="1"/></svg>
<div class="t" style="left:750px;top:159px;font-size:12px">手入力</div>
<div class="t" style="left:798px;top:151px;font-size:24px;color:#1ea0d8;font-family:'Liberation Sans'">@</div>
<div class="t" style="left:829px;top:159px;font-size:12px">単価</div>
<div class="t" style="left:866px;top:151px;font-size:24px;color:#6aaa0a;font-family:'Liberation Sans'">@</div>
<div class="t" style="left:896px;top:159px;font-size:12px">手入力単価</div>
<svg class="a" style="left:970px;top:155px" width="21" height="19"><path d="M1 1h19v12H9l-4 5v-5H1z" fill="#e4574a"/><circle cx="6" cy="7" r="1.1" fill="#fff"/><circle cx="10.5" cy="7" r="1.1" fill="#fff"/><circle cx="15" cy="7" r="1.1" fill="#fff"/></svg>
<div class="t" style="left:999px;top:159px;font-size:12px">注釈</div>
<div class="a" style="left:1036px;top:153px;width:22px;height:23px;border:2px solid #3a7ae0;background:#fff"></div>
<div class="t" style="left:1039px;top:157px;font-size:17px;color:#3a7ae0">%</div>
<div class="t" style="left:1066px;top:159px;font-size:12px">工場製作</div>
<svg class="a" style="left:1178px;top:154px" width="26" height="24"><path d="M5.3 11.6A8.5 8.5 0 1 1 13.8 20.1" stroke="#17a017" stroke-width="3" fill="none"/><path d="M0.2 11.2h10.2L5.3 17.6z" fill="#17a017"/></svg>
<div class="t" style="left:1210px;top:159px;font-size:12px;transform:scaleX(.94);transform-origin:0 0">取込直後に戻す</div>
<div class="a" style="left:361px;top:184px;width:933px;height:666px;background:#fff"></div>
<div class="a" style="left:361px;top:185px;width:933px;height:26px;background:#375e91"></div>
<div class="a" style="left:397px;top:185px;width:1px;height:26px;background:#e8eef6"></div>
<div class="a" style="left:447px;top:185px;width:1px;height:26px;background:#e8eef6"></div>
<div class="a" style="left:499px;top:185px;width:1px;height:26px;background:#e8eef6"></div>
<div class="a" style="left:838px;top:185px;width:1px;height:26px;background:#e8eef6"></div>
<div class="a" style="left:918px;top:185px;width:1px;height:26px;background:#e8eef6"></div>
<div class="a" style="left:1004px;top:185px;width:1px;height:26px;background:#e8eef6"></div>
<div class="a" style="left:1112px;top:185px;width:1px;height:26px;background:#e8eef6"></div>
<div class="a" style="left:1220px;top:185px;width:1px;height:26px;background:#e8eef6"></div>
<div class="a" style="left:1288px;top:185px;width:1px;height:26px;background:#e8eef6"></div>
<div class="a" style="left:363px;top:187px;width:33px;height:22px;border:2.5px solid #fff;border-radius:4px;background:#e0e0e0"></div>
<svg class="a" style="left:370px;top:190px" width="18" height="16"><rect width="18" height="16" rx="1" fill="#1a86f2"/><g fill="#fff"><rect x="4.2" y="2" width="3.4" height="2.3" rx=".6"/><rect x="8.8" y="2" width="3.4" height="2.3" rx=".6"/><rect x="13.4" y="2" width="3.4" height="2.3" rx=".6"/><rect x="4.2" y="5.6" width="3.4" height="2.3" rx=".6"/><rect x="8.8" y="5.6" width="3.4" height="2.3" rx=".6"/><rect x="13.4" y="5.6" width="3.4" height="2.3" rx=".6"/><rect x="4.2" y="8.9" width="3.4" height="2.3" rx=".6"/><rect x="8.8" y="8.9" width="3.4" height="2.3" rx=".6"/><rect x="13.4" y="8.9" width="3.4" height="2.3" rx=".6"/><rect x="4.2" y="12.2" width="3.4" height="2.3" rx=".6"/><rect x="8.8" y="12.2" width="3.4" height="2.3" rx=".6"/><rect x="13.4" y="12.2" width="3.4" height="2.3" rx=".6"/></g></svg>
<div class="t" style="left:397px;top:190px;width:50px;text-align:center;color:#fff;font-size:12px">区分</div>
<div class="t" style="left:447px;top:190px;width:52px;text-align:center;color:#fff;font-size:12px">付箋</div>
<div class="t" style="left:499px;top:190px;width:339px;text-align:center;color:#fff;font-size:12px">費目　施工　工種名称</div>
<div class="t" style="left:838px;top:190px;width:80px;text-align:center;color:#fff;font-size:12px">数量</div>
<div class="t" style="left:918px;top:190px;width:86px;text-align:center;color:#fff;font-size:12px">単位</div>
<div class="t" style="left:1004px;top:190px;width:108px;text-align:center;color:#fff;font-size:12px">単価</div>
<div class="t" style="left:1112px;top:190px;width:108px;text-align:center;color:#fff;font-size:12px">金額</div>
<div class="t" style="left:1220px;top:190px;width:68px;text-align:center;color:#fff;font-size:12px">表情報</div>
<div class="a" style="left:448px;top:211px;width:846px;height:50px;background:#a6d5fe"></div>
<div class="a" style="left:398px;top:211px;width:49px;height:50px;background:#fff7dd"></div>
<div class="a" style="left:361px;top:261px;width:933px;height:1px;background:#a0a0a0"></div>
<div class="a" style="left:362px;top:212px;width:34px;height:48px;border:1.5px solid #1a7ad4;border-radius:5px;background:#ddecf9"></div>
<div class="t" style="left:361px;top:230px;width:34px;text-align:center;font-size:13px">1</div>
<svg class="a" style="left:411px;top:226px" width="24" height="20"><path d="M0 0.5q0-.5.5-.5h11q.5 0 .5.5v3.5h11.5q.5 0 .5.5v15.5H0z" fill="#2e86c8"/><text x="12" y="17.5" font-size="14" font-weight="bold" fill="#fff" text-anchor="middle" font-family="Liberation Sans" textLength="7" lengthAdjust="spacingAndGlyphs">1</text></svg>
<div class="t" style="left:501px;top:214px;font-size:12px">道路改良</div>
<div class="t" style="left:918px;top:245px;width:86px;text-align:center;font-size:12px">式</div>
<div class="t" style="left:1112px;top:248px;width:105px;text-align:right;-webkit-text-stroke:0;font-family:'Liberation Mono',monospace;font-size:11px;letter-spacing:-0.6px;transform:scaleY(1.2);transform-origin:0 100%;transform-origin:100% 100%">1,558,326</div>
<div class="a" style="left:448px;top:262px;width:846px;height:50px;background:#b9defc"></div>
<div class="a" style="left:398px;top:262px;width:49px;height:50px;background:#fff"></div>
<div class="a" style="left:361px;top:312px;width:933px;height:1px;background:#a0a0a0"></div>
<div class="a" style="left:362px;top:263px;width:34px;height:48px;border:1px solid #d6d6d6;border-radius:5px;background:#fcfcfc"></div>
<div class="t" style="left:361px;top:281px;width:34px;text-align:center;font-size:13px">2</div>
<svg class="a" style="left:411px;top:277px" width="24" height="20"><path d="M0 0.5q0-.5.5-.5h11q.5 0 .5.5v3.5h11.5q.5 0 .5.5v15.5H0z" fill="#3b9ee2"/><text x="12" y="17.5" font-size="14" font-weight="bold" fill="#fff" text-anchor="middle" font-family="Liberation Sans" textLength="7" lengthAdjust="spacingAndGlyphs">2</text></svg>
<div class="t" style="left:508px;top:265px;font-size:12px">道路土工</div>
<div class="t" style="left:918px;top:296px;width:86px;text-align:center;font-size:12px">式</div>
<div class="t" style="left:1112px;top:299px;width:105px;text-align:right;-webkit-text-stroke:0;font-family:'Liberation Mono',monospace;font-size:11px;letter-spacing:-0.6px;transform:scaleY(1.2);transform-origin:0 100%;transform-origin:100% 100%">1,558,326</div>
<div class="a" style="left:448px;top:313px;width:846px;height:50px;background:#cde7fc"></div>
<div class="a" style="left:398px;top:313px;width:49px;height:50px;background:#fff"></div>
<div class="a" style="left:361px;top:363px;width:933px;height:1px;background:#a0a0a0"></div>
<div class="a" style="left:362px;top:314px;width:34px;height:48px;border:1px solid #d6d6d6;border-radius:5px;background:#fcfcfc"></div>
<div class="t" style="left:361px;top:332px;width:34px;text-align:center;font-size:13px">3</div>
<svg class="a" style="left:411px;top:328px" width="24" height="20"><path d="M0 0.5q0-.5.5-.5h11q.5 0 .5.5v3.5h11.5q.5 0 .5.5v15.5H0z" fill="#48b0ea"/><text x="12" y="17.5" font-size="14" font-weight="bold" fill="#fff" text-anchor="middle" font-family="Liberation Sans" textLength="7" lengthAdjust="spacingAndGlyphs">3</text></svg>
<div class="t" style="left:515px;top:316px;font-size:12px">掘削工</div>
<div class="t" style="left:918px;top:347px;width:86px;text-align:center;font-size:12px">式</div>
<div class="t" style="left:1112px;top:350px;width:105px;text-align:right;-webkit-text-stroke:0;font-family:'Liberation Mono',monospace;font-size:11px;letter-spacing:-0.6px;transform:scaleY(1.2);transform-origin:0 100%;transform-origin:100% 100%">194,085</div>
<div class="a" style="left:448px;top:364px;width:846px;height:50px;background:#dff0fd"></div>
<div class="a" style="left:398px;top:364px;width:49px;height:50px;background:#fff"></div>
<div class="a" style="left:361px;top:414px;width:933px;height:1px;background:#a0a0a0"></div>
<div class="a" style="left:362px;top:365px;width:34px;height:48px;border:1px solid #d6d6d6;border-radius:5px;background:#fcfcfc"></div>
<div class="t" style="left:361px;top:383px;width:34px;text-align:center;font-size:13px">4</div>
<svg class="a" style="left:411px;top:379px" width="24" height="20"><path d="M0 0.5q0-.5.5-.5h11q.5 0 .5.5v3.5h11.5q.5 0 .5.5v15.5H0z" fill="#58c0f2"/><text x="12" y="17.5" font-size="14" font-weight="bold" fill="#fff" text-anchor="middle" font-family="Liberation Sans" textLength="7" lengthAdjust="spacingAndGlyphs">4</text></svg>
<div class="t" style="left:918px;top:398px;width:86px;text-align:center;font-size:12px">式</div>
<div class="t" style="left:1112px;top:401px;width:105px;text-align:right;-webkit-text-stroke:0;font-family:'Liberation Mono',monospace;font-size:11px;letter-spacing:-0.6px;transform:scaleY(1.2);transform-origin:0 100%;transform-origin:100% 100%">194,085</div>
<div class="a" style="left:448px;top:415px;width:846px;height:50px;background:#ffffff"></div>
<div class="a" style="left:398px;top:415px;width:49px;height:50px;background:#fff"></div>
<div class="a" style="left:361px;top:465px;width:933px;height:1px;background:#a0a0a0"></div>
<div class="a" style="left:362px;top:416px;width:34px;height:48px;border:1px solid #d6d6d6;border-radius:5px;background:#fcfcfc"></div>
<div class="t" style="left:361px;top:434px;width:34px;text-align:center;font-size:13px">5</div>
<svg class="a" style="left:412px;top:427px" width="28" height="29"><path d="M1.5 1h11.5l6 6v18.5H1.5z" fill="#fff" stroke="#36a6d8" stroke-width="1.7"/><path d="M13 1v6h6" fill="#d8f0fa" stroke="#36a6d8" stroke-width="1.3"/><path d="M4.5 11h11M4.5 14.5h11M4.5 18h5M4.5 21.5h4" stroke="#9ad6ee" stroke-width="1.1"/><path d="M9 17.5Q11 23.5 21 22.5" stroke="#f28c2c" stroke-width="3.6" fill="none"/><path d="M19.5 16.5L27 22.3 19.5 28z" fill="#f28c2c"/></svg>
<div class="t" style="left:1112px;top:452px;width:105px;text-align:right;-webkit-text-stroke:0;font-family:'Liberation Mono',monospace;font-size:11px;letter-spacing:-0.6px;transform:scaleY(1.2);transform-origin:0 100%;transform-origin:100% 100%">194,085</div>
<div class="t" style="left:1220px;top:423px;width:68px;text-align:center;font-size:12px">施工</div>
<div class="t" style="left:1220px;top:443px;width:68px;text-align:center;font-size:12px">第 0001 号</div>
<div class="a" style="left:448px;top:466px;width:846px;height:50px;background:#cde7fc"></div>
<div class="a" style="left:398px;top:466px;width:49px;height:50px;background:#fff"></div>
<div class="a" style="left:361px;top:516px;width:933px;height:1px;background:#a0a0a0"></div>
<div class="a" style="left:362px;top:467px;width:34px;height:48px;border:1px solid #d6d6d6;border-radius:5px;background:#fcfcfc"></div>
<div class="t" style="left:361px;top:485px;width:34px;text-align:center;font-size:13px">6</div>
<svg class="a" style="left:411px;top:481px" width="24" height="20"><path d="M0 0.5q0-.5.5-.5h11q.5 0 .5.5v3.5h11.5q.5 0 .5.5v15.5H0z" fill="#48b0ea"/><text x="12" y="17.5" font-size="14" font-weight="bold" fill="#fff" text-anchor="middle" font-family="Liberation Sans" textLength="7" lengthAdjust="spacingAndGlyphs">3</text></svg>
<div class="t" style="left:918px;top:500px;width:86px;text-align:center;font-size:12px">式</div>
<div class="t" style="left:1112px;top:503px;width:105px;text-align:right;-webkit-text-stroke:0;font-family:'Liberation Mono',monospace;font-size:11px;letter-spacing:-0.6px;transform:scaleY(1.2);transform-origin:0 100%;transform-origin:100% 100%">2,815</div>
<div class="a" style="left:448px;top:517px;width:846px;height:50px;background:#dff0fd"></div>
<div class="a" style="left:398px;top:517px;width:49px;height:50px;background:#fff"></div>
<div class="a" style="left:361px;top:567px;width:933px;height:1px;background:#a0a0a0"></div>
<div class="a" style="left:362px;top:518px;width:34px;height:48px;border:1px solid #d6d6d6;border-radius:5px;background:#fcfcfc"></div>
<div class="t" style="left:361px;top:536px;width:34px;text-align:center;font-size:13px">7</div>
<svg class="a" style="left:411px;top:532px" width="24" height="20"><path d="M0 0.5q0-.5.5-.5h11q.5 0 .5.5v3.5h11.5q.5 0 .5.5v15.5H0z" fill="#58c0f2"/><text x="12" y="17.5" font-size="14" font-weight="bold" fill="#fff" text-anchor="middle" font-family="Liberation Sans" textLength="7" lengthAdjust="spacingAndGlyphs">4</text></svg>
<div class="t" style="left:918px;top:551px;width:86px;text-align:center;font-size:12px">式</div>
<div class="t" style="left:1112px;top:554px;width:105px;text-align:right;-webkit-text-stroke:0;font-family:'Liberation Mono',monospace;font-size:11px;letter-spacing:-0.6px;transform:scaleY(1.2);transform-origin:0 100%;transform-origin:100% 100%">2,815</div>
<div class="a" style="left:448px;top:568px;width:846px;height:50px;background:#ffffff"></div>
<div class="a" style="left:398px;top:568px;width:49px;height:50px;background:#fff"></div>
<div class="a" style="left:361px;top:618px;width:933px;height:1px;background:#a0a0a0"></div>
<div class="a" style="left:362px;top:569px;width:34px;height:48px;border:1px solid #d6d6d6;border-radius:5px;background:#fcfcfc"></div>
<div class="t" style="left:361px;top:587px;width:34px;text-align:center;font-size:13px">8</div>
<svg class="a" style="left:412px;top:580px" width="28" height="29"><path d="M1.5 1h11.5l6 6v18.5H1.5z" fill="#fff" stroke="#36a6d8" stroke-width="1.7"/><path d="M13 1v6h6" fill="#d8f0fa" stroke="#36a6d8" stroke-width="1.3"/><path d="M4.5 11h11M4.5 14.5h11M4.5 18h5M4.5 21.5h4" stroke="#9ad6ee" stroke-width="1.1"/><path d="M9 17.5Q11 23.5 21 22.5" stroke="#f28c2c" stroke-width="3.6" fill="none"/><path d="M19.5 16.5L27 22.3 19.5 28z" fill="#f28c2c"/></svg>
<div class="t" style="left:1112px;top:605px;width:105px;text-align:right;-webkit-text-stroke:0;font-family:'Liberation Mono',monospace;font-size:11px;letter-spacing:-0.6px;transform:scaleY(1.2);transform-origin:0 100%;transform-origin:100% 100%">2,815</div>
<div class="t" style="left:1220px;top:576px;width:68px;text-align:center;font-size:12px">施工</div>
<div class="t" style="left:1220px;top:596px;width:68px;text-align:center;font-size:12px">第 0002 号</div>
<div class="a" style="left:448px;top:619px;width:846px;height:50px;background:#cde7fc"></div>
<div class="a" style="left:398px;top:619px;width:49px;height:50px;background:#fff"></div>
<div class="a" style="left:361px;top:669px;width:933px;height:1px;background:#a0a0a0"></div>
<div class="a" style="left:362px;top:620px;width:34px;height:48px;border:1px solid #d6d6d6;border-radius:5px;background:#fcfcfc"></div>
<div class="t" style="left:361px;top:638px;width:34px;text-align:center;font-size:13px">9</div>
<svg class="a" style="left:411px;top:634px" width="24" height="20"><path d="M0 0.5q0-.5.5-.5h11q.5 0 .5.5v3.5h11.5q.5 0 .5.5v15.5H0z" fill="#48b0ea"/><text x="12" y="17.5" font-size="14" font-weight="bold" fill="#fff" text-anchor="middle" font-family="Liberation Sans" textLength="7" lengthAdjust="spacingAndGlyphs">3</text></svg>
<div class="t" style="left:918px;top:653px;width:86px;text-align:center;font-size:12px">式</div>
<div class="t" style="left:1112px;top:656px;width:105px;text-align:right;-webkit-text-stroke:0;font-family:'Liberation Mono',monospace;font-size:11px;letter-spacing:-0.6px;transform:scaleY(1.2);transform-origin:0 100%;transform-origin:100% 100%">22,896</div>
<div class="a" style="left:448px;top:670px;width:846px;height:50px;background:#dff0fd"></div>
<div class="a" style="left:398px;top:670px;width:49px;height:50px;background:#fff"></div>
<div class="a" style="left:361px;top:720px;width:933px;height:1px;background:#a0a0a0"></div>
<div class="a" style="left:362px;top:671px;width:34px;height:48px;border:1px solid #d6d6d6;border-radius:5px;background:#fcfcfc"></div>
<div class="t" style="left:361px;top:689px;width:34px;text-align:center;font-size:13px">10</div>
<svg class="a" style="left:411px;top:685px" width="24" height="20"><path d="M0 0.5q0-.5.5-.5h11q.5 0 .5.5v3.5h11.5q.5 0 .5.5v15.5H0z" fill="#58c0f2"/><text x="12" y="17.5" font-size="14" font-weight="bold" fill="#fff" text-anchor="middle" font-family="Liberation Sans" textLength="7" lengthAdjust="spacingAndGlyphs">4</text></svg>
<div class="t" style="left:918px;top:704px;width:86px;text-align:center;font-size:12px">式</div>
<div class="t" style="left:1112px;top:707px;width:105px;text-align:right;-webkit-text-stroke:0;font-family:'Liberation Mono',monospace;font-size:11px;letter-spacing:-0.6px;transform:scaleY(1.2);transform-origin:0 100%;transform-origin:100% 100%">22,896</div>
<div class="a" style="left:448px;top:721px;width:846px;height:50px;background:#ffffff"></div>
<div class="a" style="left:398px;top:721px;width:49px;height:50px;background:#fff"></div>
<div class="a" style="left:361px;top:771px;width:933px;height:1px;background:#a0a0a0"></div>
<div class="a" style="left:362px;top:722px;width:34px;height:48px;border:1px solid #d6d6d6;border-radius:5px;background:#fcfcfc"></div>
<div class="t" style="left:361px;top:740px;width:34px;text-align:center;font-size:13px">11</div>
<svg class="a" style="left:412px;top:733px" width="28" height="29"><path d="M1.5 1h11.5l6 6v18.5H1.5z" fill="#fff" stroke="#36a6d8" stroke-width="1.7"/><path d="M13 1v6h6" fill="#d8f0fa" stroke="#36a6d8" stroke-width="1.3"/><path d="M4.5 11h11M4.5 14.5h11M4.5 18h5M4.5 21.5h4" stroke="#9ad6ee" stroke-width="1.1"/><path d="M9 17.5Q11 23.5 21 22.5" stroke="#f28c2c" stroke-width="3.6" fill="none"/><path d="M19.5 16.5L27 22.3 19.5 28z" fill="#f28c2c"/></svg>
<div class="t" style="left:522px;top:724px;font-size:12px">路床盛土</div>
<div class="t" style="left:838px;top:758px;width:80px;text-align:center;-webkit-text-stroke:0;font-family:'Liberation Mono',monospace;font-size:11px;letter-spacing:-0.6px;transform:scaleY(1.2);transform-origin:0 100%">2</div>
<div class="t" style="left:918px;top:755px;width:86px;text-align:center;font-size:12px">m3</div>
<div class="t" style="left:1016px;top:758px;width:86px;text-align:center;-webkit-text-stroke:0;font-family:'Liberation Mono',monospace;font-size:11px;letter-spacing:-0.6px;transform:scaleY(1.2);transform-origin:0 100%">5,724</div>
<div class="t" style="left:1112px;top:758px;width:105px;text-align:right;-webkit-text-stroke:0;font-family:'Liberation Mono',monospace;font-size:11px;letter-spacing:-0.6px;transform:scaleY(1.2);transform-origin:0 100%;transform-origin:100% 100%">11,448</div>
<div class="t" style="left:1220px;top:729px;width:68px;text-align:center;font-size:12px">施工</div>
<div class="t" style="left:1220px;top:749px;width:68px;text-align:center;font-size:12px">第 0003 号</div>
<div class="a" style="left:448px;top:772px;width:846px;height:50px;background:#ffffff"></div>
<div class="a" style="left:398px;top:772px;width:49px;height:50px;background:#fff"></div>
<div class="a" style="left:361px;top:822px;width:933px;height:1px;background:#a0a0a0"></div>
<div class="a" style="left:362px;top:773px;width:34px;height:48px;border:1px solid #d6d6d6;border-radius:5px;background:#fcfcfc"></div>
<div class="t" style="left:361px;top:791px;width:34px;text-align:center;font-size:13px">12</div>
<svg class="a" style="left:412px;top:784px" width="28" height="29"><path d="M1.5 1h11.5l6 6v18.5H1.5z" fill="#fff" stroke="#36a6d8" stroke-width="1.7"/><path d="M13 1v6h6" fill="#d8f0fa" stroke="#36a6d8" stroke-width="1.3"/><path d="M4.5 11h11M4.5 14.5h11M4.5 18h5M4.5 21.5h4" stroke="#9ad6ee" stroke-width="1.1"/><path d="M9 17.5Q11 23.5 21 22.5" stroke="#f28c2c" stroke-width="3.6" fill="none"/><path d="M19.5 16.5L27 22.3 19.5 28z" fill="#f28c2c"/></svg>
<div class="t" style="left:522px;top:775px;font-size:12px">路床盛土</div>
<div class="t" style="left:838px;top:809px;width:80px;text-align:center;-webkit-text-stroke:0;font-family:'Liberation Mono',monospace;font-size:11px;letter-spacing:-0.6px;transform:scaleY(1.2);transform-origin:0 100%">2</div>
<div class="t" style="left:918px;top:806px;width:86px;text-align:center;font-size:12px">m3</div>
<div class="t" style="left:1016px;top:809px;width:86px;text-align:center;-webkit-text-stroke:0;font-family:'Liberation Mono',monospace;font-size:11px;letter-spacing:-0.6px;transform:scaleY(1.2);transform-origin:0 100%">5,724</div>
<div class="t" style="left:1112px;top:809px;width:105px;text-align:right;-webkit-text-stroke:0;font-family:'Liberation Mono',monospace;font-size:11px;letter-spacing:-0.6px;transform:scaleY(1.2);transform-origin:0 100%;transform-origin:100% 100%">11,448</div>
<div class="t" style="left:1220px;top:780px;width:68px;text-align:center;font-size:12px">施工</div>
<div class="t" style="left:1220px;top:800px;width:68px;text-align:center;font-size:12px">第 0003 号</div>
<div class="a" style="left:448px;top:823px;width:846px;height:27px;background:#cde7fc"></div>
<div class="a" style="left:398px;top:823px;width:49px;height:27px;background:#fff"></div>
<div class="a" style="left:362px;top:824px;width:34px;height:48px;border:1px solid #d6d6d6;border-radius:5px;background:#fcfcfc"></div>
<div class="t" style="left:361px;top:842px;width:34px;text-align:center;font-size:13px">13</div>
<svg class="a" style="left:411px;top:838px" width="24" height="20"><path d="M0 0.5q0-.5.5-.5h11q.5 0 .5.5v3.5h11.5q.5 0 .5.5v15.5H0z" fill="#48b0ea"/><text x="12" y="17.5" font-size="14" font-weight="bold" fill="#fff" text-anchor="middle" font-family="Liberation Sans" textLength="7" lengthAdjust="spacingAndGlyphs">3</text></svg>
<div class="t" style="left:515px;top:826px;font-size:12px">法面整形工</div>
<div class="a" style="left:397px;top:211px;width:1px;height:639px;background:#a0a0a0"></div>
<div class="a" style="left:447px;top:211px;width:1px;height:639px;background:#a0a0a0"></div>
<div class="a" style="left:499px;top:211px;width:1px;height:639px;background:#a0a0a0"></div>
<div class="a" style="left:838px;top:211px;width:1px;height:639px;background:#a0a0a0"></div>
<div class="a" style="left:918px;top:211px;width:1px;height:639px;background:#a0a0a0"></div>
<div class="a" style="left:1004px;top:211px;width:1px;height:639px;background:#a0a0a0"></div>
<div class="a" style="left:1112px;top:211px;width:1px;height:639px;background:#a0a0a0"></div>
<div class="a" style="left:1220px;top:211px;width:1px;height:639px;background:#a0a0a0"></div>
<div class="a" style="left:1288px;top:211px;width:1px;height:639px;background:#a0a0a0"></div>
<div class="a" style="left:399px;top:212px;width:895px;height:48px;border:1px solid #0000f0;border-bottom:1.5px solid #0000f0;border-right:none"></div>
<div class="a" style="left:448px;top:833px;width:846px;height:17px;background:#f0f0f0"></div>
<div class="a" style="left:465px;top:841px;width:471px;height:2px;background:#7a7a7a"></div>
<div class="a" style="left:1294px;top:184px;width:18px;height:666px;background:#efefef"></div>
<div class="a" style="left:1302px;top:202px;width:2px;height:210px;background:#7a7a7a"></div>
<div class="a" style="left:1312px;top:24px;width:1px;height:856px;background:#555"></div>
<div class="a" style="left:0;top:850px;width:1313px;height:30px;background:#f0f0f0"></div>
<div class="a" style="left:4px;top:850px;width:1308px;height:29px;background:linear-gradient(#fff 0,#fff 55%,#ececec 100%);border-radius:4px 4px 0 0"></div>
<div class="a" style="left:0;top:879px;width:1313px;height:1px;background:#3c3c3c"></div>
<div class="a" style="left:0;top:850px;width:4px;height:30px;background:linear-gradient(90deg,#444 0,#444 1px,#9db9e0 1px,#9db9e0 3px,#888 3px)"></div>
<div class="a" style="left:15px;top:860px;width:13px;height:13px;background:#0a62c0;border-radius:2px"></div>
<svg class="a" style="left:15px;top:860px" width="13" height="13"><path d="M3 6.5l2.5 2.5 4.5-5" stroke="#fff" stroke-width="1.2" fill="none"/></svg>
<div class="t" style="left:35px;top:859px;font-size:13px">ツリーの連動</div>
<svg class="a" style="left:124px;top:858px" width="18" height="18"><g transform="translate(8.6 8.7)" fill="#1e88f0"><circle r="5.6"/><rect x="-1.6" y="-8" width="3.2" height="4" rx=".6" transform="rotate(0)"/><rect x="-1.6" y="-8" width="3.2" height="4" rx=".6" transform="rotate(45)"/><rect x="-1.6" y="-8" width="3.2" height="4" rx=".6" transform="rotate(90)"/><rect x="-1.6" y="-8" width="3.2" height="4" rx=".6" transform="rotate(135)"/><rect x="-1.6" y="-8" width="3.2" height="4" rx=".6" transform="rotate(180)"/><rect x="-1.6" y="-8" width="3.2" height="4" rx=".6" transform="rotate(225)"/><rect x="-1.6" y="-8" width="3.2" height="4" rx=".6" transform="rotate(270)"/><rect x="-1.6" y="-8" width="3.2" height="4" rx=".6" transform="rotate(315)"/></g><circle cx="8.6" cy="8.7" r="2.4" fill="#fff"/></svg>
<div class="t" style="left:147px;top:859px;font-size:13px">複写・置換設定</div>
<div class="a" style="left:245px;top:860px;width:13px;height:13px;background:#0a62c0;border-radius:2px"></div>
<svg class="a" style="left:245px;top:860px" width="13" height="13"><path d="M3 6.5l2.5 2.5 4.5-5" stroke="#fff" stroke-width="1.2" fill="none"/></svg>
<div class="t" style="left:265px;top:859px;font-size:13px">自動検索機能</div>
<svg class="a" style="left:354px;top:858px" width="18" height="18"><ellipse cx="8.8" cy="6.8" rx="4.6" ry="5.6" fill="#f0904a"/><rect x="4.2" y="6.2" width="9.2" height="1.3" fill="#f6b886"/><path d="M1.5 17Q1.5 12.8 8.8 12.8T16 17z" fill="#f0904a"/></svg>
<div class="t" style="left:377px;top:859px;font-size:13px">労務置換設定</div>
<div class="a" style="left:467px;top:865px;width:13px;height:3px;background:#b8b8b8"></div>
<div class="t" style="left:488px;top:859px;font-size:13px;color:#7a7a7a">労務割増：なし</div>
<svg class="a" style="left:584px;top:866px" width="6" height="4"><path d="M0 0h6L3 3z" fill="#888"/></svg>
<div class="a" style="left:600px;top:865px;width:13px;height:3px;background:#b8b8b8"></div>
<div class="t" style="left:621px;top:859px;font-size:13px;color:#7a7a7a">クレーン賃料補正：なし</div>
<svg class="a" style="left:771px;top:866px" width="6" height="4"><path d="M0 0h6L3 3z" fill="#888"/></svg>
<div class="a" style="left:842px;top:854px;width:1px;height:22px;background:#a8a8a8"></div>
<div class="t" style="left:850px;top:859px;font-size:13px;color:#1030c8;text-decoration:underline">単価増減設定：なし</div>
<div class="a" style="left:973px;top:854px;width:1px;height:22px;background:#a8a8a8"></div>
<div class="t" style="left:980px;top:859px;font-size:13px;color:#1030c8;text-decoration:underline">週休２日工事：補正なし</div>
<div class="a" style="left:1126px;top:854px;width:1px;height:22px;background:#a8a8a8"></div>
<svg class="a" style="left:1130px;top:857px" width="17" height="17"><rect x=".5" y=".5" width="16" height="16" rx="2" fill="#dff0ff" stroke="#4aa0e0"/><path d="M3 13h11v-3H9L7 5 4 6l2 4H3z" fill="#f07a20"/></svg>
<div class="t" style="left:1152px;top:859px;font-size:13px;color:#1030c8;text-decoration:underline">公共土木</div>
<div class="a" style="left:1209px;top:854px;width:1px;height:22px;background:#a8a8a8"></div>
<div class="t" style="left:1230px;top:859px;font-size:13px;letter-spacing:.7px">1 / 25 行</div>
<div class="a" style="left:1288px;top:854px;width:1px;height:22px;background:#a8a8a8"></div>
<svg class="a" style="left:1298px;top:864px" width="13" height="13"><g fill="#b0b0b0"><rect x="9" y="1" width="2" height="2"/><rect x="5" y="5" width="2" height="2"/><rect x="9" y="5" width="2" height="2"/><rect x="1" y="9" width="2" height="2"/><rect x="5" y="9" width="2" height="2"/><rect x="9" y="9" width="2" height="2"/></g></svg>
<div class="a" style="left:450px;top:346px;width:699px;height:356px;background:#fff;border:2px solid #464646;box-shadow:1px 1px 2px rgba(0,0,0,.3)"></div>
<div class="a" style="left:452px;top:348px;width:695px;height:29px;background:#eef1f7"></div>
<svg class="a" style="left:458px;top:355px" width="14" height="14"><circle cx="7" cy="7" r="7" fill="#1e88e5"/><path d="M4.5 3.5h3.5l1.5 1.5v5.5h-5z" fill="#fff"/><path d="M6 7h2M6 8.5h2" stroke="#1e88e5" stroke-width=".8"/></svg>
<div class="t" style="left:479px;top:355px;font-size:12px;color:#4a4a4a">設計書の追加･編集</div>
<svg class="a" style="left:1132px;top:356px" width="12" height="12"><path d="M1 1l10 10M11 1L1 11" stroke="#222" stroke-width="1.3"/></svg>
<div class="t" style="left:457px;top:384px;font-size:12px">編集する場合は、設計書行をダブルクリックで編集画面（別画面）が開きます。</div>
<div class="t" style="left:457px;top:403px;font-size:12px">削除する場合は、削除する設計書にチェックし削除ボタンを押してください。</div>
<div class="a" style="left:452px;top:426px;width:695px;height:1px;background:#7c7c7c"></div>
<div class="a" style="left:452px;top:427px;width:695px;height:31px;background:linear-gradient(#fff 0,#f2f4fd 30%,#d6ddf8 70%,#bcc8f2 100%)"></div>
<svg class="a" style="left:459px;top:434px" width="16" height="16"><path d="M8 1v14M1 8h14" stroke="#1e88f0" stroke-width="3.2"/></svg>
<div class="t" style="left:482px;top:436px;font-size:12px">設計書追加</div>
<div class="a" style="left:551px;top:432px;width:1px;height:22px;background:#b4bcd4"></div>
<svg class="a" style="left:560px;top:434px" width="16" height="16"><path d="M8 1v14M1 8h14" stroke="#1e88f0" stroke-width="3.2"/></svg>
<div class="t" style="left:583px;top:436px;font-size:12px">積算済み工事追加</div>
<div class="a" style="left:688px;top:432px;width:1px;height:22px;background:#b4bcd4"></div>
<svg class="a" style="left:696px;top:434px" width="17" height="17"><path d="M2 15l1-4 9-9 3 3-9 9z" fill="#2a86e0"/><path d="M2 15l1-4 3 3z" fill="#cfe4ff"/></svg>
<div class="t" style="left:720px;top:436px;font-size:12px">設計書編集</div>
<div class="a" style="left:789px;top:432px;width:1px;height:22px;background:#b4bcd4"></div>
<svg class="a" style="left:796px;top:433px" width="18" height="18"><circle cx="9" cy="9" r="7.6" fill="none" stroke="#e03c3c" stroke-width="2"/><path d="M5.5 5.5l7 7M12.5 5.5l-7 7" stroke="#e03c3c" stroke-width="2"/></svg>
<div class="t" style="left:820px;top:436px;font-size:12px">設計書削除</div>
<svg class="a" style="left:1098px;top:434px" width="16" height="16"><path d="M8 2v13" stroke="#a4a4a8" stroke-width="2.8"/><path d="M1.5 8.5L8 2l6.5 6.5" stroke="#a4a4a8" stroke-width="2.8" fill="none"/></svg>
<svg class="a" style="left:1126px;top:434px" width="16" height="16"><path d="M8 1v13" stroke="#a4a4a8" stroke-width="2.8"/><path d="M1.5 7.5L8 14l6.5-6.5" stroke="#a4a4a8" stroke-width="2.8" fill="none"/></svg>
<!-- grid -->
<div class="a" style="left:452px;top:458px;width:695px;height:1px;background:#8a8a8a"></div>
<div class="a" style="left:452px;top:459px;width:695px;height:22px;background:#f0f0f0"></div>
<div class="a" style="left:483px;top:460px;width:49px;height:21px;background:#0078d7"></div>
<div class="a" style="left:483px;top:481px;width:664px;height:25px;background:#0078d7"></div>
<div class="a" style="left:453px;top:481px;width:29px;height:50px;background:#f0f0f0"></div>
<div class="a" style="left:452px;top:480px;width:695px;height:1px;background:#8a8a8a"></div>
<div class="a" style="left:452px;top:505px;width:695px;height:1px;background:#8a8a8a"></div>
<div class="a" style="left:452px;top:530px;width:695px;height:1px;background:#8a8a8a"></div>
<div class="a" style="left:482px;top:459px;width:1px;height:72px;background:#8a8a8a"></div>
<div class="a" style="left:532px;top:459px;width:1px;height:72px;background:#8a8a8a"></div>
<div class="a" style="left:632px;top:459px;width:1px;height:72px;background:#8a8a8a"></div>
<div class="a" style="left:732px;top:459px;width:1px;height:72px;background:#8a8a8a"></div>
<div class="a" style="left:832px;top:459px;width:1px;height:72px;background:#8a8a8a"></div>
<div class="a" style="left:932px;top:459px;width:1px;height:72px;background:#8a8a8a"></div>
<div class="a" style="left:1032px;top:459px;width:1px;height:72px;background:#8a8a8a"></div>
<div class="t" style="left:488px;top:463px;font-size:13px">削除</div>
<div class="t" style="left:539px;top:463px;font-size:13px">登録日</div>
<div class="t" style="left:639px;top:463px;font-size:13px">工事区分</div>
<div class="t" style="left:739px;top:463px;font-size:13px">工事区分名称</div>
<div class="t" style="left:839px;top:463px;font-size:13px">経費年度</div>
<div class="t" style="left:939px;top:463px;font-size:13px">経費工種</div>
<div class="t" style="left:1038px;top:463px;font-size:13px;transform:scaleX(.93);transform-origin:0 0">表No連番グループ</div>
<div class="t" style="left:463px;top:490px;width:14px;text-align:center;font-size:13px">1</div>
<div class="t" style="left:463px;top:514px;width:14px;text-align:center;font-size:13px">2</div>
<div class="t" style="left:536px;top:487px;font-size:13px;color:#fff">2025年10月2...</div>
<div class="t" style="left:636px;top:487px;font-size:13px;color:#fff">本工事</div>
<div class="t" style="left:736px;top:487px;font-size:13px;color:#fff">本工事費</div>
<div class="t" style="left:836px;top:487px;font-size:13px;color:#fff">令和 6年度</div>
<div class="t" style="left:936px;top:487px;font-size:13px;color:#fff">河川工事</div>
<div class="t" style="left:1036px;top:487px;font-size:13px;color:#fff">本工事費等</div>
<div class="a" style="left:501px;top:511px;width:13px;height:13px;border:1px solid #555;border-radius:3px;background:#fbfbfb"></div>
<div class="t" style="left:536px;top:512px;font-size:13px">2025年11月5日</div>
<div class="t" style="left:636px;top:512px;font-size:13px">本工事</div>
<div class="t" style="left:736px;top:512px;font-size:13px">本工事費</div>
<div class="t" style="left:836px;top:512px;font-size:13px">令和 6年度</div>
<div class="t" style="left:936px;top:512px;font-size:13px">河川工事</div>
<div class="t" style="left:1036px;top:512px;font-size:13px">本工事費等</div>
<div class="a" style="left:452px;top:653px;width:695px;height:1px;background:#7c7c7c"></div>
<svg class="a" style="left:462px;top:672px" width="16" height="16"><circle cx="8" cy="8" r="7.5" fill="#1ea6f0"/><text x="8" y="12.5" font-size="12" font-weight="bold" fill="#fff" text-anchor="middle" font-family="Liberation Sans">?</text></svg>
<div class="t" style="left:482px;top:673px;font-size:13px;color:#2a2af0;text-decoration:underline">マニュアル</div>
<div class="a" style="left:932px;top:666px;width:100px;height:28px;background:#ffea6e;border:2px solid #4a94dc;border-radius:4px"></div>
<svg class="a" style="left:935px;top:669px" width="22" height="22"><circle cx="11" cy="11" r="10" fill="#4a8aa8"/><path d="M6 11l3.5 3.5 7-7" stroke="#fff" stroke-width="2.6" fill="none"/></svg>
<div class="t" style="left:975px;top:673px;font-size:13px">確定</div>
<div class="a" style="left:1040px;top:666px;width:99px;height:28px;background:#e4e4e4;border:2px solid #f4f4f4;outline:1px solid #d0d0d0;border-radius:4px"></div>
<svg class="a" style="left:1044px;top:669px" width="22" height="22"><circle cx="11" cy="11" r="10" fill="#dc5050"/><path d="M7 7l8 8M15 7l-8 8" stroke="#fff" stroke-width="3"/></svg>
<div class="t" style="left:1066px;top:673px;font-size:13px">キャンセル</div>
</body></html>
